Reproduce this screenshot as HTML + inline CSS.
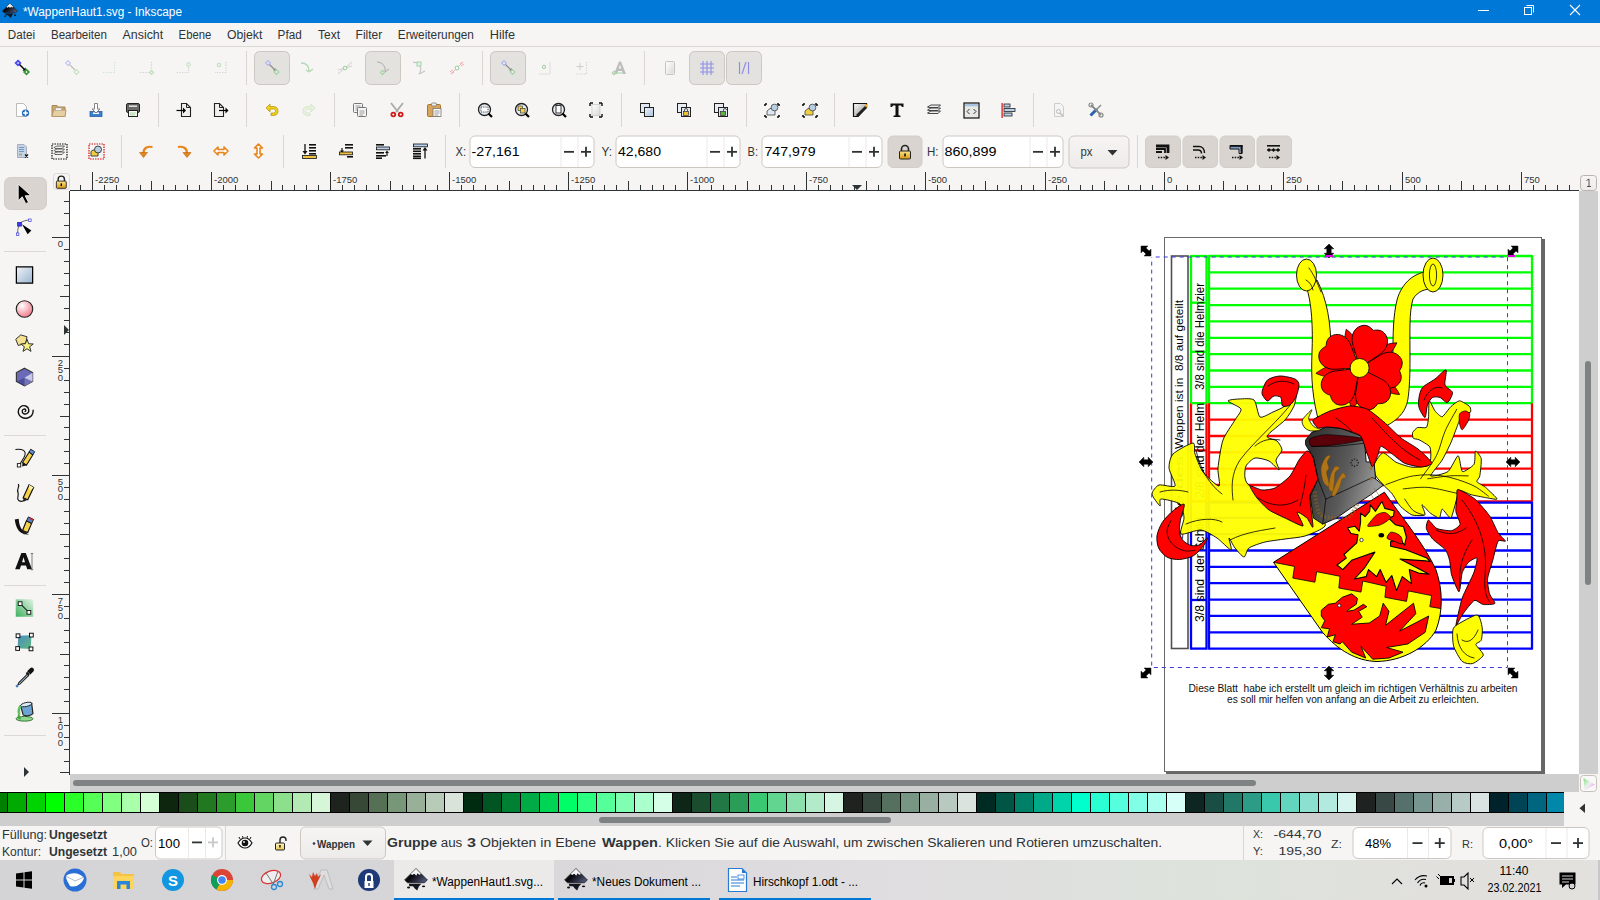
<!DOCTYPE html><html><head><meta charset="utf-8"><title>Inkscape</title><style>html,body{margin:0;padding:0;background:#f6f5f4;overflow:hidden;width:1600px;height:900px}text{font-family:"Liberation Sans",sans-serif;white-space:pre}</style></head><body><svg width="1600" height="900" viewBox="0 0 1600 900" font-family='"Liberation Sans", sans-serif' style="display:block"><defs>
<linearGradient id="gpage" x1="0" y1="0" x2="1" y2="1"><stop offset="0" stop-color="#fff"/><stop offset="1" stop-color="#d8d8d8"/></linearGradient>
<linearGradient id="gblue" x1="0" y1="0" x2="1" y2="1"><stop offset="0" stop-color="#f0f4f8"/><stop offset="1" stop-color="#a8c0dc"/></linearGradient>
<linearGradient id="gblue2" x1="0" y1="0" x2="0" y2="1"><stop offset="0" stop-color="#5a82b8"/><stop offset="1" stop-color="#dfe8f4"/></linearGradient>
<linearGradient id="gfill" x1="0" y1="0" x2="1" y2="1"><stop offset="0" stop-color="#fff"/><stop offset="1" stop-color="#888"/></linearGradient>
<linearGradient id="glock" x1="0" y1="0" x2="0" y2="1"><stop offset="0" stop-color="#fde48a"/><stop offset="1" stop-color="#d89a10"/></linearGradient>
<linearGradient id="glock2" x1="0" y1="0" x2="0" y2="1"><stop offset="0" stop-color="#fff6c0"/><stop offset="1" stop-color="#e8c850"/></linearGradient>
<linearGradient id="gbtn" x1="0" y1="0" x2="0" y2="1"><stop offset="0" stop-color="#f6f5f4"/><stop offset="1" stop-color="#edebe9"/></linearGradient>
<linearGradient id="grect" x1="0" y1="0" x2="1" y2="1"><stop offset="0" stop-color="#f0f4f8"/><stop offset="1" stop-color="#9ab4d0"/></linearGradient>
<radialGradient id="gcirc" cx="0.35" cy="0.3" r="0.8"><stop offset="0" stop-color="#fff"/><stop offset="1" stop-color="#f07080"/></radialGradient>
<linearGradient id="ggrad" x1="0" y1="1" x2="1" y2="0"><stop offset="0" stop-color="#40b060"/><stop offset="1" stop-color="#e0f4e4"/></linearGradient>
<linearGradient id="gmesh" x1="0" y1="0" x2="1" y2="1"><stop offset="0" stop-color="#4a8cc0"/><stop offset="1" stop-color="#60b880"/></linearGradient>
<linearGradient id="gcm" x1="0" y1="0" x2="1" y2="1"><stop offset="0" stop-color="#80e080"/><stop offset="0.5" stop-color="#f0f0f0"/><stop offset="1" stop-color="#e080f0"/></linearGradient>
<linearGradient id="ghelm" x1="0" y1="0" x2="1" y2="0.3"><stop offset="0" stop-color="#2a2a2a"/><stop offset="0.6" stop-color="#5a5a5a"/><stop offset="1" stop-color="#9a9a9a"/></linearGradient>
<linearGradient id="gink" x1="0" y1="0" x2="1" y2="0.6"><stop offset="0" stop-color="#777"/><stop offset="0.45" stop-color="#050508"/><stop offset="1" stop-color="#4a5070"/></linearGradient>
<linearGradient id="gtask" x1="0" y1="0" x2="1" y2="0"><stop offset="0" stop-color="#d4d3d5"/><stop offset="0.25" stop-color="#d6d5d7"/><stop offset="0.55" stop-color="#e0dde0"/><stop offset="0.75" stop-color="#dde3dc"/><stop offset="0.9" stop-color="#e1e0dd"/><stop offset="1" stop-color="#e2e1de"/></linearGradient>
</defs><rect x="0" y="0" width="1600" height="900" fill="#f6f5f4" /><rect x="0" y="0" width="1600" height="23" fill="#0078d7" /><text x="23" y="16" font-size="12" fill="#ffffff" font-weight="normal" text-anchor="start" textLength="159" lengthAdjust="spacingAndGlyphs" >*WappenHaut1.svg - Inkscape</text><rect x="1478" y="10" width="11" height="1" fill="#fff"/><rect x="1524.5" y="7.5" width="7" height="7" fill="none" stroke="#fff"/><path d="M1526.5 5.5H1533.5V12.5" fill="none" stroke="#fff"/><path d="M1570 5L1580 15M1580 5L1570 15" stroke="#fff" stroke-width="1.1"/><g transform="translate(2,3) scale(0.8)"><path d="M10 0.5L19.5 10L17 12.3H3L0.5 10Z" fill="url(#gink)" stroke="#111" stroke-width="0.6"/><path d="M10 0.7L14.2 4.9L12.6 5.6L11.3 4.4L10.2 6.4L8.6 4.8L6.8 5.8L5.6 5.1Z" fill="#f2f2f2"/><path d="M4 13.2H14.5L12.5 15.3L11 18.8L9.2 17.2L7.5 15.2H4.5Z" fill="#151520"/><ellipse cx="3.8" cy="16.3" rx="1.3" ry="0.8" fill="#111"/><ellipse cx="16.3" cy="15.3" rx="1.4" ry="0.8" fill="#111"/></g><text x="7.800000000000001" y="39" font-size="12.5" fill="#2e3436" font-weight="normal" text-anchor="start" textLength="27.2" lengthAdjust="spacingAndGlyphs" >Datei</text><text x="50.9" y="39" font-size="12.5" fill="#2e3436" font-weight="normal" text-anchor="start" textLength="56.1" lengthAdjust="spacingAndGlyphs" >Bearbeiten</text><text x="122.60000000000001" y="39" font-size="12.5" fill="#2e3436" font-weight="normal" text-anchor="start" textLength="40.6" lengthAdjust="spacingAndGlyphs" >Ansicht</text><text x="178.6" y="39" font-size="12.5" fill="#2e3436" font-weight="normal" text-anchor="start" textLength="32.7" lengthAdjust="spacingAndGlyphs" >Ebene</text><text x="226.9" y="39" font-size="12.5" fill="#2e3436" font-weight="normal" text-anchor="start" textLength="35.4" lengthAdjust="spacingAndGlyphs" >Objekt</text><text x="277.59999999999997" y="39" font-size="12.5" fill="#2e3436" font-weight="normal" text-anchor="start" textLength="24.1" lengthAdjust="spacingAndGlyphs" >Pfad</text><text x="318.09999999999997" y="39" font-size="12.5" fill="#2e3436" font-weight="normal" text-anchor="start" textLength="21.9" lengthAdjust="spacingAndGlyphs" >Text</text><text x="355.59999999999997" y="39" font-size="12.5" fill="#2e3436" font-weight="normal" text-anchor="start" textLength="26.6" lengthAdjust="spacingAndGlyphs" >Filter</text><text x="397.79999999999995" y="39" font-size="12.5" fill="#2e3436" font-weight="normal" text-anchor="start" textLength="76.1" lengthAdjust="spacingAndGlyphs" >Erweiterungen</text><text x="489.7" y="39" font-size="12.5" fill="#2e3436" font-weight="normal" text-anchor="start" textLength="25.5" lengthAdjust="spacingAndGlyphs" >Hilfe</text><rect x="0" y="46" width="1600" height="1" fill="#dcd9d5" /><g transform="translate(14.0,60.0) scale(1.0)"><path d="M4 0.7000000000000002L6.3 3L4 5.3L1.7000000000000002 3Z" fill="#fff" stroke="#4a4af0" stroke-width="1.8"/><path d="M5.5 4.5L11 10" stroke="#000" stroke-width="1.4"/><path d="M8.5 10.5L12 11L11.5 7.5Z" fill="#000"/><path d="M12.5 9.7L14.8 12L12.5 14.3L10.2 12Z" fill="#fff" stroke="#3a9a3a" stroke-width="1.8"/></g><rect x="47" y="51" width="1" height="34" fill="#dad6d2" /><g transform="translate(64.0,60.0) scale(1.0)"><path d="M4 0.7000000000000002L6.3 3L4 5.3L1.7000000000000002 3Z" fill="#fff" stroke="#c8c8f4" stroke-width="1.3"/><path d="M5.5 4.5L11 10" stroke="#bbb" stroke-width="1.1"/><path d="M12.5 9.7L14.8 12L12.5 14.3L10.2 12Z" fill="#fff" stroke="#c6e2c6" stroke-width="1.3"/></g><g transform="translate(101.0,60.0) scale(1.0)"><path d="M13.5 2V12.5H2" fill="none" stroke="#cfe5cf" stroke-width="1.2" stroke-dasharray="1.3 1.3"/></g><g transform="translate(138.0,60.0) scale(1.0)"><path d="M13.5 2V12.5H2" fill="none" stroke="#d2d2d2" stroke-width="1.2" stroke-dasharray="1.3 1.3"/><path d="M13.5 10.5L15.5 12.5L13.5 14.5L11.5 12.5Z" fill="#eaf4ea" stroke="#bfe0bf" stroke-width="1.2"/></g><g transform="translate(175.0,60.0) scale(1.0)"><path d="M13.5 2V12.5H2" fill="none" stroke="#d2d2d2" stroke-width="1.2" stroke-dasharray="1.3 1.3"/><circle cx="13.5" cy="4.5" r="1.8" fill="#eaf4ea" stroke="#bfe0bf"/></g><g transform="translate(212.0,60.0) scale(1.0)"><path d="M14 2V12.5H3" fill="none" stroke="#d2d2d2" stroke-width="1.2" stroke-dasharray="1.3 1.3"/><circle cx="7" cy="5" r="1.7" fill="none" stroke="#bfe0bf" stroke-width="1.2"/></g><rect x="246" y="51" width="1" height="34" fill="#dad6d2" /><rect x="254.5" y="51.5" width="35" height="33" rx="5" fill="#e3e2de" stroke="#cdc7c2"/><g transform="translate(264.0,60.0) scale(1.0)"><path d="M4 0.7000000000000002L6.3 3L4 5.3L1.7000000000000002 3Z" fill="#eee" stroke="#b8b8f0" stroke-width="1.3"/><path d="M5.5 4.5L11 10" stroke="#888" stroke-width="1.1"/><path d="M9 10.5L12 11L11.5 8Z" fill="#888"/><path d="M12.5 9.7L14.8 12L12.5 14.3L10.2 12Z" fill="#eee" stroke="#a8d4a8" stroke-width="1.3"/></g><g transform="translate(300.0,60.0) scale(1.0)"><path d="M1 3C6 3 9 6 9 11M9 12L13 9M9 12L6 10" fill="none" stroke="#b4dab4" stroke-width="1.3"/></g><g transform="translate(337.0,60.0) scale(1.0)"><path d="M1 14L15 2M1 10L15 6" stroke="#c8c8c8" stroke-width="0.9"/><circle cx="8" cy="8" r="1.7" fill="#fff" stroke="#a8d4a8" stroke-width="1.2"/></g><rect x="365.5" y="51.5" width="35" height="33" rx="5" fill="#e3e2de" stroke="#cdc7c2"/><g transform="translate(375.0,60.0) scale(1.0)"><path d="M2 2C7 2 11 6 10 12M10 12L14 9" fill="none" stroke="#aaa" stroke-width="1"/><path d="M7.5 10.5L9.5 12.5L7.5 14.5L5.5 12.5Z" fill="#eee" stroke="#a8d4a8" stroke-width="1.3"/></g><g transform="translate(412.0,60.0) scale(1.0)"><path d="M1 2L5 3C9 6 10 10 7 14M7 14L13 11" fill="none" stroke="#bbb" stroke-width="1"/><rect x="5" y="2" width="4" height="4" fill="#e6f2e6" stroke="#a8d4a8"/></g><g transform="translate(449.0,60.0) scale(1.0)"><path d="M2 14L14 2" stroke="#f0b0b0" stroke-width="0.9"/><path d="M1 12l3 -2M2 14l3 -2M11 4l3 -2M12 6l3 -2" stroke="#f0a0a0" stroke-width="0.9"/><circle cx="8" cy="8" r="1.8" fill="#fff" stroke="#a8d4a8" stroke-width="1.2"/></g><rect x="482" y="51" width="1" height="34" fill="#dad6d2" /><rect x="490.5" y="51.5" width="35" height="33" rx="5" fill="#e3e2de" stroke="#cdc7c2"/><g transform="translate(500.0,60.0) scale(1.0)"><path d="M4 0.7000000000000002L6.3 3L4 5.3L1.7000000000000002 3Z" fill="#eee" stroke="#b8b8f0" stroke-width="1.3"/><path d="M5.5 4.5L11 10" stroke="#888" stroke-width="1.1"/><path d="M9 10.5L12 11L11.5 8Z" fill="#888"/><path d="M12.5 9.7L14.8 12L12.5 14.3L10.2 12Z" fill="#eee" stroke="#a8d4a8" stroke-width="1.3"/></g><g transform="translate(536.0,60.0) scale(1.0)"><path d="M14 2V14H3" fill="none" stroke="#ddd" stroke-width="1"/><circle cx="8" cy="7" r="1.6" fill="none" stroke="#a8d4a8" stroke-width="1.1"/></g><g transform="translate(573.0,60.0) scale(1.0)"><path d="M13.5 2V14H2" fill="none" stroke="#d2d2d2" stroke-width="1.2" stroke-dasharray="1.3 1.3"/><path d="M7 3V10M3.5 6.5H10.5" stroke="#ccc" stroke-width="1"/></g><g transform="translate(611.0,60.0) scale(1.0)"><path d="M3 14L8 1.5H10L15 14H12L11 11H7L6 14Z M7.7 8.5H10.3L9 4.5Z" fill="#bdbdbd" fill-rule="evenodd"/><path d="M3 11.2L4.8 13L3 14.8L1.2 13Z" fill="none" stroke="#a8d4a8" stroke-width="1.1"/><path d="M5 13H12" stroke="#a8d4a8"/></g><rect x="644" y="51" width="1" height="34" fill="#dad6d2" /><g transform="translate(662.0,60.0) scale(1.0)"><rect x="3.5" y="1.5" width="9" height="13" rx="1" fill="#f2f2f2" stroke="#c4c4c4"/><rect x="4.5" y="2.5" width="7" height="11" fill="url(#gpage)"/></g><rect x="689.5" y="51.5" width="35" height="33" rx="5" fill="#e3e2de" stroke="#cdc7c2"/><g transform="translate(699.0,60.0) scale(1.0)"><path d="M4 1V15M8 1V15M12 1V15M1 4H15M1 8H15M1 12H15" stroke="#8f8fe6" stroke-width="1.1"/></g><rect x="726.5" y="51.5" width="35" height="33" rx="5" fill="#e3e2de" stroke="#cdc7c2"/><g transform="translate(736.0,60.0) scale(1.0)"><path d="M3.5 2V14M12.5 2V14M10 2L6 14" stroke="#8f8fe6" stroke-width="1.2"/></g><g transform="translate(14.0,102.0) scale(1.0)"><path d="M2.5 1.5H9.5L12.5 4.5V14.5H2.5Z" fill="#fff" stroke="#bbb"/><circle cx="11.5" cy="11" r="3.6" fill="#2266bb"/><path d="M11.5 8.6V13.4M9.1 11H13.9" stroke="#fff" stroke-width="1.5"/></g><g transform="translate(50.5,102.0) scale(1.0)"><path d="M1.5 3.5H6.5L7.5 5H14.5V14.5H1.5Z" fill="#c9a872" stroke="#a8884f"/><path d="M1.5 14.5L3 8H15.5L14.5 14.5Z" fill="#e6cfa0" stroke="#b8986a"/><rect x="5" y="6" width="6" height="2.5" fill="#fff" stroke="#999" stroke-width="0.6"/></g><g transform="translate(88.0,102.0) scale(1.0)"><rect x="2" y="9.5" width="12" height="5" fill="#3a7fd0" stroke="#2a5fa0" stroke-width="0.8"/><rect x="5" y="10.5" width="6" height="1.5" fill="#fff"/><path d="M6.5 1.5H9.5V7H12L8 11L4 7H6.5Z" fill="#fff" stroke="#777" stroke-width="0.9"/></g><g transform="translate(125.0,102.0) scale(1.0)"><rect x="1.5" y="1.5" width="13" height="9" rx="1.5" fill="#6a6a6a" stroke="#222"/><rect x="3.5" y="3" width="9" height="2.5" fill="#ddd" stroke="#333" stroke-width="0.5"/><rect x="3.5" y="8.5" width="9" height="6" fill="#f4f8f0" stroke="#222"/><path d="M5 11H11M5 12.8H10" stroke="#9c9" stroke-width="0.8"/></g><rect x="158" y="93" width="1" height="34" fill="#dad6d2" /><g transform="translate(176.0,102.0) scale(1.0)"><path d="M5.5 1.5H10.5L14.5 5.5V14.5H5.5Z" fill="#f0f0ec" stroke="#222" stroke-width="1.1"/><path d="M10.5 1.5V5.5H14.5" fill="none" stroke="#222"/><path d="M0.5 8.5H8" stroke="#000" stroke-width="1.2"/><path d="M7 5.5L10 8.5L7 11.5Z" fill="#000"/></g><g transform="translate(213.0,102.0) scale(1.0)"><path d="M1.5 1.5H6.5L10.5 5.5V14.5H1.5Z" fill="#f0f0ec" stroke="#222" stroke-width="1.1"/><path d="M6.5 1.5V5.5H10.5" fill="none" stroke="#222"/><path d="M6 8.5H13" stroke="#000" stroke-width="1.2"/><path d="M12.5 5.5L15.5 8.5L12.5 11.5Z" fill="#000"/></g><rect x="246" y="93" width="1" height="34" fill="#dad6d2" /><g transform="translate(264.0,102.0) scale(1.0)"><path d="M2 6L6 2V4.5H9.5C12.5 4.5 14 6.5 14 9S12.5 13.5 9.5 13.5H7V11H9.5C11 11 11.5 10 11.5 9S11 7 9.5 7H6V10Z" fill="#f0d020" stroke="#b89a00" stroke-width="0.8"/></g><g transform="translate(301.0,102.0) scale(1.0)"><path d="M14 6L10 2V4.5H6.5C3.5 4.5 2 6.5 2 9S3.5 13.5 6.5 13.5H9V11H6.5C5 11 4.5 10 4.5 9S5 7 6.5 7H10V10Z" fill="#e8f2e0" stroke="#cfe3c4" stroke-width="0.8"/></g><rect x="334" y="93" width="1" height="34" fill="#dad6d2" /><g transform="translate(352.0,102.0) scale(1.0)"><rect x="1.5" y="1.5" width="9" height="9" rx="1" fill="#f4f4f4" stroke="#777"/><path d="M3.5 4H8.5M3.5 6H8.5M3.5 8H7" stroke="#888" stroke-width="0.8"/><rect x="5.5" y="5.5" width="9" height="9" rx="1" fill="#f4f4f4" stroke="#777"/><path d="M7.5 9H12.5M7.5 11H12.5M7.5 13H11" stroke="#888" stroke-width="0.8"/></g><g transform="translate(389.0,102.0) scale(1.0)"><path d="M2 1L9 10M14 1L7 10" stroke="#aaa" stroke-width="1.8"/><circle cx="4.3" cy="12.5" r="2.8" fill="#d01818"/><circle cx="11.7" cy="12.5" r="2.8" fill="#d01818"/><circle cx="4.3" cy="12.5" r="1" fill="#fff"/><circle cx="11.7" cy="12.5" r="1" fill="#fff"/></g><g transform="translate(426.0,102.0) scale(1.0)"><rect x="1.5" y="2.5" width="13" height="12" rx="1" fill="#d9a55b" stroke="#a8742a"/><rect x="5.5" y="1" width="5" height="3" rx="1" fill="#eee" stroke="#777" stroke-width="0.8"/><rect x="7" y="6.5" width="8" height="8" fill="#f8f8f8" stroke="#777" stroke-width="0.8"/><path d="M8.5 9H13.5M8.5 11H13.5M8.5 13H12" stroke="#888" stroke-width="0.8"/></g><rect x="459" y="93" width="1" height="34" fill="#dad6d2" /><g transform="translate(477.0,102.0) scale(1.0)"><circle cx="7.5" cy="7.5" r="6" fill="#e6ecf2" stroke="#222" stroke-width="1.3"/><rect x="4" y="5" width="7" height="5" fill="#fff" stroke="#222" stroke-width="0.8" stroke-dasharray="1 0.8"/><path d="M11.5 11.5L15 15" stroke="#000" stroke-width="2.2"/></g><g transform="translate(514.0,102.0) scale(1.0)"><circle cx="7.5" cy="7.5" r="6" fill="#e6ecf2" stroke="#222" stroke-width="1.3"/><rect x="4" y="4" width="4.5" height="4.5" fill="#f2d050" stroke="#444" stroke-width="0.7"/><rect x="6.5" y="6.5" width="4.5" height="4.5" fill="#f2d050" stroke="#444" stroke-width="0.7"/><path d="M11.5 11.5L15 15" stroke="#000" stroke-width="2.2"/></g><g transform="translate(551.0,102.0) scale(1.0)"><circle cx="7.5" cy="7.5" r="6" fill="#e6ecf2" stroke="#222" stroke-width="1.3"/><rect x="5" y="3.5" width="5" height="7.5" fill="#fff" stroke="#222" stroke-width="0.9"/><path d="M11.5 11.5L15 15" stroke="#000" stroke-width="2.2"/></g><g transform="translate(588.0,102.0) scale(1.0)"><rect x="4" y="2.5" width="8" height="11" fill="url(#gpage)" stroke="#bbb" stroke-width="0.6"/><path d="M2 1V4M2 1H5M14 1V4M14 1H11M2 15V12M2 15H5M14 15V12M14 15H11" stroke="#111" stroke-width="1.4"/></g><rect x="621" y="93" width="1" height="34" fill="#dad6d2" /><g transform="translate(639.0,102.0) scale(1.0)"><rect x="1.5" y="1.5" width="9" height="9" fill="#e0e8f0" stroke="#222"/><rect x="5.5" y="5.5" width="9" height="9" fill="url(#gblue)" stroke="#222"/></g><g transform="translate(676.0,102.0) scale(1.0)"><rect x="1.5" y="1.5" width="9" height="9" fill="#e8eef4" stroke="#222"/><rect x="5.5" y="5.5" width="9" height="9" fill="#dfe8f2" stroke="#222"/><rect x="7.5" y="9.5" width="5" height="4" fill="#f0c030" stroke="#333" stroke-width="0.7"/><path d="M8.5 9.5V8A1.5 1.5 0 0 1 11.5 8V9.5" fill="none" stroke="#333" stroke-width="0.8"/></g><g transform="translate(713.0,102.0) scale(1.0)"><rect x="1.5" y="1.5" width="9" height="9" fill="#e8eef4" stroke="#222"/><rect x="5.5" y="5.5" width="9" height="9" fill="#dfe8f2" stroke="#222"/><rect x="7.5" y="9.5" width="5" height="4" fill="#60b040" stroke="#333" stroke-width="0.7"/><path d="M10.5 9.5V8A1.5 1.5 0 0 1 13.5 8" fill="none" stroke="#333" stroke-width="0.8"/></g><rect x="746" y="93" width="1" height="34" fill="#dad6d2" /><g transform="translate(764.0,102.0) scale(1.0)"><path d="M1 2h2M1 2v2M13 2h2M15 2v2M1 15h2M1 15v-2M13 15h2M15 15v-2" stroke="#111" stroke-width="1.6"/><path d="M3 9L6 6.5H11V13H3Z" fill="#dfe8f2" stroke="#444" stroke-width="0.8"/><circle cx="10.5" cy="5.5" r="3.4" fill="#b8cde0" stroke="#444" stroke-width="0.8"/></g><g transform="translate(802.0,102.0) scale(1.0)"><path d="M1 2h2M1 2v2M13 2h2M15 2v2M1 15h2M1 15v-2M13 15h2M15 15v-2" stroke="#111" stroke-width="1.6"/><path d="M3 9L6 6.5H11V13H3Z" fill="#f0d040" stroke="#444" stroke-width="0.8"/><circle cx="10.5" cy="5.5" r="3.4" fill="#b8cde0" stroke="#444" stroke-width="0.8"/></g><rect x="834" y="93" width="1" height="34" fill="#dad6d2" /><g transform="translate(852.0,102.0) scale(1.0)"><path d="M1.5 1.5H14.5V5L6 14.5H1.5Z" fill="url(#gfill)" stroke="#111" stroke-width="1.2"/><path d="M4 13L13 4L15 6L6 15Z" fill="#222"/><path d="M12.5 3.5L15.5 1.5V6Z" fill="#f0b020"/></g><g transform="translate(889.0,102.0) scale(1.0)"><path d="M1.5 1.5H14.5V5H13L12 3.5H9.5V13.2L11.5 13.8V15H4.5V13.8L6.5 13.2V3.5H4L3 5H1.5Z" fill="#111"/></g><g transform="translate(926.0,102.0) scale(1.0)"><path d="M1.5 11L5 9H14.5L12 11.5H3Z" fill="#eee" stroke="#333" stroke-width="0.9"/><path d="M1.5 8L5 6H14.5L12 8.5H3Z" fill="#eee" stroke="#333" stroke-width="0.9"/><path d="M1.5 5L5 3H14.5L12 5.5H3Z" fill="#eee" stroke="#333" stroke-width="0.9"/></g><g transform="translate(963.0,102.0) scale(1.0)"><rect x="1" y="1" width="15" height="15" fill="#e8e8e4" stroke="#111" stroke-width="1.2"/><rect x="2" y="2" width="13" height="2.3" fill="#aac4e4"/><path d="M6.5 7L4 9.5L6.5 12M10.5 7L13 9.5L10.5 12" fill="none" stroke="#333" stroke-width="1"/></g><g transform="translate(1000.0,102.0) scale(1.0)"><rect x="1.5" y="1" width="1.2" height="15" fill="#d01010"/><rect x="4" y="2" width="6" height="3" fill="#b8d0ec" stroke="#222" stroke-width="0.8"/><rect x="4" y="6.5" width="11" height="3" fill="#b8d0ec" stroke="#222" stroke-width="0.8"/><rect x="4" y="11" width="8" height="3" fill="#b8d0ec" stroke="#222" stroke-width="0.8"/></g><rect x="1033" y="93" width="1" height="34" fill="#dad6d2" /><g transform="translate(1051.0,102.0) scale(1.0)"><path d="M3.5 1.5H9.5L12.5 4.5V14.5H3.5Z" fill="#f4f4f4" stroke="#ccc"/><circle cx="7.5" cy="9.5" r="2" fill="none" stroke="#bbb"/><path d="M9 11L12 14" stroke="#bbb" stroke-width="1.4"/></g><g transform="translate(1088.0,102.0) scale(1.0)"><path d="M2.5 13.5L9 7" stroke="#2a62b0" stroke-width="3"/><path d="M9 7L13 3" stroke="#888" stroke-width="1.5"/><path d="M3 3L13 13" stroke="#888" stroke-width="1.8"/><circle cx="3" cy="3" r="2" fill="none" stroke="#888" stroke-width="1.2"/><circle cx="13" cy="13" r="2" fill="none" stroke="#888" stroke-width="1.2"/></g><g transform="translate(14.0,143.0) scale(1.0)"><path d="M3.5 1.5H10L12.5 4V14.5H3.5Z" fill="#c0d4ea" stroke="#aab"/><path d="M5 4.5H10M5 6.5H10M5 8.5H10" stroke="#6688aa" stroke-width="0.8"/><rect x="5" y="10.5" width="3" height="2" fill="#c8a060"/><path d="M11 11.5L14 14.5M14 11.5L11 14.5" stroke="#111" stroke-width="1.3"/></g><g transform="translate(51.0,143.0) scale(1.0)"><rect x="1" y="1" width="15" height="15" fill="none" stroke="#111" stroke-width="1.2" stroke-dasharray="1.5 1"/><path d="M3 10.5L6 9H13.5L11 11.5H4Z" fill="#eee" stroke="#444" stroke-width="0.8"/><path d="M3 7.5L6 6H13.5L11 8.5H4Z" fill="#eee" stroke="#444" stroke-width="0.8"/><path d="M3 4.5L6 3H13.5L11 5.5H4Z" fill="#eee" stroke="#444" stroke-width="0.8"/></g><g transform="translate(88.0,143.0) scale(1.0)"><rect x="1" y="1" width="15" height="15" fill="none" stroke="#d01010" stroke-width="1.2" stroke-dasharray="1.5 1"/><path d="M3 8.5L5 7H10V13H3Z" fill="#f0d040" stroke="#333" stroke-width="0.9"/><circle cx="10" cy="6.5" r="3.5" fill="#b8cde0" stroke="#333" stroke-width="0.9"/></g><rect x="121" y="135" width="1" height="33" fill="#dad6d2" /><g transform="translate(138.5,143.0) scale(1.0)"><path d="M14 4C9 3 5 5 5 10" fill="none" stroke="#e8851a" stroke-width="2.2"/><path d="M1 9.5H9L5 14.5Z" fill="#e8851a" stroke="#b85f08" stroke-width="0.6"/></g><g transform="translate(176.0,143.0) scale(1.0)"><path d="M2 4C7 3 11 5 11 10" fill="none" stroke="#e8851a" stroke-width="2.2"/><path d="M15 9.5H7L11 14.5Z" fill="#e8851a" stroke="#b85f08" stroke-width="0.6"/></g><g transform="translate(213.0,143.0) scale(1.0)"><path d="M1 8L5 4V6.5H11V4L15 8L11 12V9.5H5V12Z" fill="#fff" stroke="#e8851a" stroke-width="1.6" stroke-linejoin="round"/></g><g transform="translate(250.5,143.0) scale(1.0)"><path d="M8 1L12 5H9.5V11H12L8 15L4 11H6.5V5H4Z" fill="#fff" stroke="#e8851a" stroke-width="1.6" stroke-linejoin="round"/></g><rect x="283" y="135" width="1" height="33" fill="#dad6d2" /><g transform="translate(301.0,143.0) scale(1.0)"><path d="M4 1V10" stroke="#111" stroke-width="1.3"/><path d="M1.5 8L4 11.5L6.5 8Z" fill="#111"/><rect x="8" y="1" width="7" height="1.6" fill="#111"/><rect x="8" y="4" width="7" height="1.6" fill="#111"/><rect x="8" y="7" width="7" height="1.6" fill="#111"/><rect x="8" y="10" width="7" height="1.6" fill="#111"/><rect x="1.5" y="12.5" width="14" height="3" fill="#f0c040" stroke="#111" stroke-width="0.8"/></g><g transform="translate(338.0,143.0) scale(1.0)"><rect x="7" y="1" width="8" height="1.6" fill="#111"/><rect x="7" y="4" width="8" height="1.6" fill="#111"/><rect x="9" y="13" width="6" height="1.6" fill="#111"/><path d="M4 5V9" stroke="#111" stroke-width="1.2"/><path d="M2 7.5L4 10L6 7.5Z" fill="#111"/><rect x="1.5" y="9" width="13" height="2.8" fill="#f0c040" stroke="#111" stroke-width="0.8"/></g><g transform="translate(375.0,143.0) scale(1.0)"><rect x="1" y="1" width="8" height="1.6" fill="#111"/><rect x="1" y="9" width="8" height="1.6" fill="#111"/><rect x="1" y="12" width="10" height="1.6" fill="#111"/><rect x="1" y="14.4" width="6" height="1.6" fill="#111"/><rect x="1.5" y="4" width="13" height="2.8" fill="#b8d0ec" stroke="#111" stroke-width="0.8"/><path d="M12 13V9" stroke="#111" stroke-width="1.2"/><path d="M10 10L12 7.5L14 10Z" fill="#111"/></g><g transform="translate(412.0,143.0) scale(1.0)"><rect x="1.5" y="1" width="14" height="2.8" fill="#b8d0ec" stroke="#111" stroke-width="0.8"/><rect x="1" y="5" width="8" height="1.6" fill="#111"/><rect x="1" y="7.5" width="8" height="1.6" fill="#111"/><rect x="1" y="10" width="8" height="1.6" fill="#111"/><rect x="1" y="12.5" width="8" height="1.6" fill="#111"/><rect x="1" y="14.5" width="8" height="1.6" fill="#111"/><path d="M13 15.5V6" stroke="#111" stroke-width="1.3"/><path d="M10.5 7.5L13 4L15.5 7.5Z" fill="#111"/></g><rect x="445" y="135" width="1" height="33" fill="#dad6d2" /><text x="455.5" y="156" font-size="12.5" fill="#2e3436" font-weight="normal" text-anchor="start" textLength="10.5" lengthAdjust="spacingAndGlyphs" >X:</text><rect x="470.0" y="136.0" width="124.0" height="31.5" rx="5" fill="#fff" stroke="#cdc7c2"/><rect x="560.5" y="136.5" width="1" height="30.5" fill="#ebe9e6" /><rect x="577.5" y="136.5" width="1" height="30.5" fill="#ebe9e6" /><rect x="564.0" y="150.95" width="10" height="1.8" fill="#2e3436" /><rect x="581.0" y="150.95" width="10" height="1.8" fill="#2e3436" /><rect x="585.1" y="146.75" width="1.8" height="10" fill="#2e3436" /><text x="471.6" y="156.35" font-size="12.5" fill="#000" font-weight="normal" text-anchor="start" textLength="48" lengthAdjust="spacingAndGlyphs" >-27,161</text><text x="601.5" y="156" font-size="12.5" fill="#2e3436" font-weight="normal" text-anchor="start" textLength="10.5" lengthAdjust="spacingAndGlyphs" >Y:</text><rect x="616.0" y="136.0" width="124.0" height="31.5" rx="5" fill="#fff" stroke="#cdc7c2"/><rect x="706.5" y="136.5" width="1" height="30.5" fill="#ebe9e6" /><rect x="723.5" y="136.5" width="1" height="30.5" fill="#ebe9e6" /><rect x="710.0" y="150.95" width="10" height="1.8" fill="#2e3436" /><rect x="727.0" y="150.95" width="10" height="1.8" fill="#2e3436" /><rect x="731.1" y="146.75" width="1.8" height="10" fill="#2e3436" /><text x="618" y="156.35" font-size="12.5" fill="#000" font-weight="normal" text-anchor="start" textLength="43" lengthAdjust="spacingAndGlyphs" >42,680</text><text x="747.5" y="156" font-size="12.5" fill="#2e3436" font-weight="normal" text-anchor="start" textLength="10.5" lengthAdjust="spacingAndGlyphs" >B:</text><rect x="762.0" y="136.0" width="120.0" height="31.5" rx="5" fill="#fff" stroke="#cdc7c2"/><rect x="848.5" y="136.5" width="1" height="30.5" fill="#ebe9e6" /><rect x="865.5" y="136.5" width="1" height="30.5" fill="#ebe9e6" /><rect x="852.0" y="150.95" width="10" height="1.8" fill="#2e3436" /><rect x="869.0" y="150.95" width="10" height="1.8" fill="#2e3436" /><rect x="873.1" y="146.75" width="1.8" height="10" fill="#2e3436" /><text x="764.5" y="156.35" font-size="12.5" fill="#000" font-weight="normal" text-anchor="start" textLength="51" lengthAdjust="spacingAndGlyphs" >747,979</text><rect x="888.0" y="136.0" width="34.0" height="31.5" rx="5" fill="#d9d4cf" stroke="#d3cec9"/><g transform="translate(897.0,144.0) scale(1.0)"><path d="M4.5 7V5A3.5 3.5 0 0 1 11.5 5V7" fill="none" stroke="#222" stroke-width="1.6"/><rect x="2.5" y="7" width="11" height="8" rx="1" fill="url(#glock)" stroke="#222" stroke-width="1"/><rect x="7.2" y="9.5" width="1.6" height="3" fill="#111"/></g><text x="927" y="156" font-size="12.5" fill="#2e3436" font-weight="normal" text-anchor="start" textLength="11.5" lengthAdjust="spacingAndGlyphs" >H:</text><rect x="943.0" y="136.0" width="120.0" height="31.5" rx="5" fill="#fff" stroke="#cdc7c2"/><rect x="1029.5" y="136.5" width="1" height="30.5" fill="#ebe9e6" /><rect x="1046.5" y="136.5" width="1" height="30.5" fill="#ebe9e6" /><rect x="1033.0" y="150.95" width="10" height="1.8" fill="#2e3436" /><rect x="1050.0" y="150.95" width="10" height="1.8" fill="#2e3436" /><rect x="1054.1" y="146.75" width="1.8" height="10" fill="#2e3436" /><text x="944.6" y="156.35" font-size="12.5" fill="#000" font-weight="normal" text-anchor="start" textLength="52" lengthAdjust="spacingAndGlyphs" >860,899</text><rect x="1069" y="136" width="60" height="32" rx="5" fill="url(#gbtn)" stroke="#cdc7c2"/><text x="1080.5" y="156" font-size="12.5" fill="#2e3436" font-weight="normal" text-anchor="start" textLength="12" lengthAdjust="spacingAndGlyphs" >px</text><path d="M1107.5 150H1117.5L1112.5 155.5Z" fill="#2e3436"/><rect x="1137" y="135" width="1" height="33" fill="#dad6d2" /><rect x="1145.5" y="136.0" width="35" height="31.5" rx="5" fill="#d9d4cf" stroke="#d3cec9"/><rect x="1183.0" y="136.0" width="34.5" height="31.5" rx="5" fill="#d9d4cf" stroke="#d3cec9"/><rect x="1220.0" y="136.0" width="34.5" height="31.5" rx="5" fill="#d9d4cf" stroke="#d3cec9"/><rect x="1257.0" y="136.0" width="34.5" height="31.5" rx="5" fill="#d9d4cf" stroke="#d3cec9"/><g transform="translate(1155.0,144.0) scale(1.0)"><path d="M1 2H13V9M1 5H10V9M1 8H7" fill="none" stroke="#111" stroke-width="1.8"/><path d="M1 2H13V9" fill="none" stroke="#111" stroke-width="2.8"/><path d="M3 13.5H11" stroke="#111" stroke-width="1.3" stroke-dasharray="1.5 1.2"/><path d="M10.5 11L14 13.5L10.5 16Z" fill="#111"/></g><g transform="translate(1192.0,144.0) scale(1.0)"><path d="M1 2.5H7C10 2.5 12.5 5 12.5 9M1 6H6C8 6 9.5 7.5 9.5 9.5" fill="none" stroke="#111" stroke-width="1.5"/><path d="M3 13.5H11" stroke="#111" stroke-width="1.3" stroke-dasharray="1.5 1.2"/><path d="M10.5 11L14 13.5L10.5 16Z" fill="#111"/></g><g transform="translate(1229.0,144.0) scale(1.0)"><path d="M1 1.5H13V9.5H10V5H1Z" fill="url(#gblue2)" stroke="#111" stroke-width="1"/><rect x="1" y="1" width="12.5" height="1.8" fill="#111"/><rect x="11.6" y="1" width="1.8" height="8.5" fill="#111"/><path d="M3 13.5H11" stroke="#111" stroke-width="1.3" stroke-dasharray="1.5 1.2"/><path d="M10.5 11L14 13.5L10.5 16Z" fill="#111"/></g><g transform="translate(1266.0,144.0) scale(1.0)"><rect x="1" y="1" width="13" height="1.6" fill="#111"/><path d="M1 6L3 4L5 6L3 8ZM5.5 6L7.5 4L9.5 6L7.5 8ZM10 6L12 4L14 6L12 8Z" fill="#111"/><rect x="1" y="5.5" width="13" height="1" fill="#111"/><path d="M3 13.5H11" stroke="#111" stroke-width="1.3" stroke-dasharray="1.5 1.2"/><path d="M10.5 11L14 13.5L10.5 16Z" fill="#111"/></g><rect x="70" y="190" width="1509" height="1" fill="#2e3436" /><path d="M80.5 185V190M92.5 172V190M104.5 185V190M116.5 185V190M128.5 185V190M140.5 185V190M151.5 181V190M163.5 185V190M175.5 185V190M187.5 185V190M199.5 185V190M211.5 172V190M223.5 185V190M235.5 185V190M247.5 185V190M259.5 185V190M271.5 181V190M282.5 185V190M294.5 185V190M306.5 185V190M318.5 185V190M330.5 172V190M342.5 185V190M354.5 185V190M366.5 185V190M378.5 185V190M390.5 181V190M402.5 185V190M413.5 185V190M425.5 185V190M437.5 185V190M449.5 172V190M461.5 185V190M473.5 185V190M485.5 185V190M497.5 185V190M509.5 181V190M521.5 185V190M533.5 185V190M544.5 185V190M556.5 185V190M568.5 172V190M580.5 185V190M592.5 185V190M604.5 185V190M616.5 185V190M628.5 181V190M640.5 185V190M652.5 185V190M663.5 185V190M675.5 185V190M687.5 172V190M699.5 185V190M711.5 185V190M723.5 185V190M735.5 185V190M747.5 181V190M759.5 185V190M771.5 185V190M783.5 185V190M794.5 185V190M806.5 172V190M818.5 185V190M830.5 185V190M842.5 185V190M854.5 185V190M866.5 181V190M878.5 185V190M890.5 185V190M902.5 185V190M914.5 185V190M925.5 172V190M937.5 185V190M949.5 185V190M961.5 185V190M973.5 185V190M985.5 181V190M997.5 185V190M1009.5 185V190M1021.5 185V190M1033.5 185V190M1045.5 172V190M1056.5 185V190M1068.5 185V190M1080.5 185V190M1092.5 185V190M1104.5 181V190M1116.5 185V190M1128.5 185V190M1140.5 185V190M1152.5 185V190M1164.5 172V190M1176.5 185V190M1187.5 185V190M1199.5 185V190M1211.5 185V190M1223.5 181V190M1235.5 185V190M1247.5 185V190M1259.5 185V190M1271.5 185V190M1283.5 172V190M1295.5 185V190M1307.5 185V190M1318.5 185V190M1330.5 185V190M1342.5 181V190M1354.5 185V190M1366.5 185V190M1378.5 185V190M1390.5 185V190M1402.5 172V190M1414.5 185V190M1426.5 185V190M1438.5 185V190M1449.5 185V190M1461.5 181V190M1473.5 185V190M1485.5 185V190M1497.5 185V190M1509.5 185V190M1521.5 172V190M1533.5 185V190M1545.5 185V190M1557.5 185V190M1569.5 185V190" stroke="#2e3436" stroke-width="1"/><text x="95.0" y="182.7" font-size="9.5" fill="#2e3436" font-weight="normal" text-anchor="start" >-2250</text><text x="214.0" y="182.7" font-size="9.5" fill="#2e3436" font-weight="normal" text-anchor="start" >-2000</text><text x="333.0" y="182.7" font-size="9.5" fill="#2e3436" font-weight="normal" text-anchor="start" >-1750</text><text x="452.0" y="182.7" font-size="9.5" fill="#2e3436" font-weight="normal" text-anchor="start" >-1500</text><text x="571.0" y="182.7" font-size="9.5" fill="#2e3436" font-weight="normal" text-anchor="start" >-1250</text><text x="690.0" y="182.7" font-size="9.5" fill="#2e3436" font-weight="normal" text-anchor="start" >-1000</text><text x="809.0" y="182.7" font-size="9.5" fill="#2e3436" font-weight="normal" text-anchor="start" >-750</text><text x="928.0" y="182.7" font-size="9.5" fill="#2e3436" font-weight="normal" text-anchor="start" >-500</text><text x="1048.0" y="182.7" font-size="9.5" fill="#2e3436" font-weight="normal" text-anchor="start" >-250</text><text x="1167.0" y="182.7" font-size="9.5" fill="#2e3436" font-weight="normal" text-anchor="start" >0</text><text x="1286.0" y="182.7" font-size="9.5" fill="#2e3436" font-weight="normal" text-anchor="start" >250</text><text x="1405.0" y="182.7" font-size="9.5" fill="#2e3436" font-weight="normal" text-anchor="start" >500</text><text x="1524.0" y="182.7" font-size="9.5" fill="#2e3436" font-weight="normal" text-anchor="start" >750</text><path d="M852 185H862L857 190Z" fill="#2e3436"/><rect x="53.5" y="173.5" width="16" height="16" rx="3" fill="#f6f5f4" stroke="#dcd8d4" /><g transform="translate(54.099999999999994,174.8) scale(0.9)"><path d="M4.5 7V5A3.5 3.5 0 0 1 11.5 5V7" fill="none" stroke="#222" stroke-width="1.6"/><rect x="2.5" y="7" width="11" height="8" rx="1" fill="url(#glock)" stroke="#222" stroke-width="1"/><rect x="7.2" y="9.5" width="1.6" height="3" fill="#111"/></g><rect x="1580.5" y="175.5" width="16" height="15" rx="3" fill="url(#gbtn)" stroke="#b9b3ad"/><path d="M1586.5 180.5L1589 179V186.5H1591M1587 186.5H1589" fill="none" stroke="#444" stroke-width="0.9"/><rect x="69" y="191" width="1" height="584" fill="#2e3436" /><path d="M64 201.5H69M64 213.5H69M64 225.5H69M52 237.5H69M64 249.5H69M64 261.5H69M64 273.5H69M64 285.5H69M60 296.5H69M64 308.5H69M64 320.5H69M64 332.5H69M64 344.5H69M52 356.5H69M64 368.5H69M64 380.5H69M64 392.5H69M64 404.5H69M60 416.5H69M64 427.5H69M64 439.5H69M64 451.5H69M64 463.5H69M52 475.5H69M64 487.5H69M64 499.5H69M64 511.5H69M64 523.5H69M60 534.5H69M64 546.5H69M64 558.5H69M64 570.5H69M64 582.5H69M52 594.5H69M64 606.5H69M64 618.5H69M64 630.5H69M64 642.5H69M60 654.5H69M64 665.5H69M64 677.5H69M64 689.5H69M64 701.5H69M52 713.5H69M64 725.5H69M64 737.5H69M64 749.5H69M64 761.5H69M60 772.5H69" stroke="#2e3436" stroke-width="1"/><text x="60.4" y="246.8" font-size="9.5" fill="#2e3436" font-weight="normal" text-anchor="middle" >0</text><text x="60.4" y="365.8" font-size="9.5" fill="#2e3436" font-weight="normal" text-anchor="middle" >2</text><text x="60.4" y="373.40000000000003" font-size="9.5" fill="#2e3436" font-weight="normal" text-anchor="middle" >5</text><text x="60.4" y="381.0" font-size="9.5" fill="#2e3436" font-weight="normal" text-anchor="middle" >0</text><text x="60.4" y="484.8" font-size="9.5" fill="#2e3436" font-weight="normal" text-anchor="middle" >5</text><text x="60.4" y="492.40000000000003" font-size="9.5" fill="#2e3436" font-weight="normal" text-anchor="middle" >0</text><text x="60.4" y="500.0" font-size="9.5" fill="#2e3436" font-weight="normal" text-anchor="middle" >0</text><text x="60.4" y="603.8" font-size="9.5" fill="#2e3436" font-weight="normal" text-anchor="middle" >7</text><text x="60.4" y="611.4" font-size="9.5" fill="#2e3436" font-weight="normal" text-anchor="middle" >5</text><text x="60.4" y="619.0" font-size="9.5" fill="#2e3436" font-weight="normal" text-anchor="middle" >0</text><text x="60.4" y="722.8" font-size="9.5" fill="#2e3436" font-weight="normal" text-anchor="middle" >1</text><text x="60.4" y="730.4" font-size="9.5" fill="#2e3436" font-weight="normal" text-anchor="middle" >0</text><text x="60.4" y="738.0" font-size="9.5" fill="#2e3436" font-weight="normal" text-anchor="middle" >0</text><text x="60.4" y="745.5999999999999" font-size="9.5" fill="#2e3436" font-weight="normal" text-anchor="middle" >0</text><path d="M64 325V335L69 330Z" fill="#2e3436"/><rect x="4.5" y="177.5" width="42" height="32" rx="6" fill="#d9d4cf" stroke="#d3cec9"/><g transform="translate(14.5,183.0) scale(1.25)"><path d="M3 1L3 14L6.2 11L9 16.5L11.2 15.5L8.5 10.2L13 10Z" fill="#000" stroke="#fff" stroke-width="0.6"/></g><g transform="translate(14.5,218.0) scale(1.25)"><path d="M4 5C5 3 8 2 12 1.5" fill="none" stroke="#666" stroke-width="0.8"/><path d="M4 5C3 7 2.5 9 2.5 12.5" fill="none" stroke="#666" stroke-width="0.8"/><rect x="2.5" y="3.5" width="3" height="3" fill="#3c3cf0" stroke="#2222aa" stroke-width="0.6"/><rect x="11.3" y="0.8" width="2" height="2" fill="#fff" stroke="#4444dd" stroke-width="0.6"/><rect x="1.5" y="12" width="2" height="2" fill="#fff" stroke="#4444dd" stroke-width="0.6"/><path d="M6 5L13.5 10L10.5 13Z" fill="#000"/></g><rect x="4" y="251" width="42" height="1" fill="#dcd8d4" /><g transform="translate(14.5,265.0) scale(1.25)"><rect x="1.5" y="1.5" width="13" height="13" fill="url(#grect)" stroke="#000" stroke-width="1"/></g><g transform="translate(14.5,299.0) scale(1.25)"><circle cx="8" cy="8" r="6.6" fill="url(#gcirc)" stroke="#222" stroke-width="0.9"/></g><g transform="translate(14.5,333.0) scale(1.25)"><path d="M1 5L5 1.5L10 3L9 8L3 10Z" fill="#f4e090" stroke="#333" stroke-width="0.8"/><path d="M10 5L11.3 8.6L15 8.8L12.1 11L13.2 14.7L10 12.6L6.8 14.7L7.9 11L5 8.8L8.7 8.6Z" fill="#f8f080" stroke="#333" stroke-width="0.8"/></g><g transform="translate(14.5,367.0) scale(1.25)"><path d="M8 1L14.5 4.5V11.5L8 15L1.5 11.5V4.5Z" fill="#6a6ab8" stroke="#333" stroke-width="0.9"/><path d="M8 8.5L14.5 4.5V11.5L8 15Z" fill="#c8c8ec"/><path d="M8 8.5L1.5 11.5L8 15L14.5 11.5Z" fill="#3a3a8a" opacity="0.6"/></g><g transform="translate(14.5,401.0) scale(1.25)"><path d="M8 8.5C8.8 8.5 9.2 7.8 9 7.2C8.5 6 6.5 6.3 6.2 7.8C5.8 9.8 8.2 11 10 10C12.3 8.7 11.8 5 9 4C5.8 2.9 2.8 5.5 3 8.8C3.3 12.5 7 14.5 10.5 13.6C13.5 12.8 15 10 15 7" fill="none" stroke="#111" stroke-width="1.1"/></g><rect x="4" y="435" width="42" height="1" fill="#dcd8d4" /><g transform="translate(14.1,447.6) scale(1.3)"><path d="M1 1.5C5 1 8 2 8.5 4C9 7 6 9 4.5 13" fill="none" stroke="#111" stroke-width="0.8"/><rect x="2.5" y="12.3" width="2.6" height="2.6" fill="#fff" stroke="#111" stroke-width="0.7"/><path d="M6.5 11.5L11.5 3.5L14.5 5.5L9.5 13.5Z" fill="#f6d24c" stroke="#111" stroke-width="0.8"/><path d="M11.5 3.5L12.8 1.2L15.8 3.2L14.5 5.5Z" fill="#5a90d0" stroke="#111" stroke-width="0.7"/><path d="M6.5 11.5L6.2 14.5L9.5 13.5Z" fill="#111"/></g><g transform="translate(14.1,481.6) scale(1.3)"><path d="M3 2C5 3 1.5 6 3 8.5C4 10.5 1.5 12.5 3.5 14.5C5 15.5 7 15 8 14" fill="none" stroke="#111" stroke-width="0.9"/><path d="M7 12.5L11.5 2.5L15 4.5L10.5 14Z" fill="#f6d24c" stroke="#111" stroke-width="0.9"/><path d="M11.5 2.5L15 4.5L12 7Z" fill="#fff3b0"/><path d="M7 12.5L7.3 15.5L10.5 14Z" fill="#222"/></g><g transform="translate(14.1,515.6) scale(1.3)"><path d="M0.5 3C1.5 10 4 15 11.5 14.5C7.5 13 4 10.5 3.5 2.5Z" fill="#111"/><path d="M6.5 11.5L9.5 4L13.5 6L10.5 13Z" fill="#f6d24c" stroke="#111" stroke-width="0.9"/><path d="M9.5 4L11 1L15 3L13.5 6Z" fill="#5a7cc8" stroke="#111" stroke-width="0.7"/><path d="M12 2L14.5 3.3" stroke="#d02020" stroke-width="1"/><path d="M6.5 11.5L7.5 14.5L10.5 13Z" fill="#222"/></g><g transform="translate(14.5,551.0) scale(1.25)"><path d="M0.5 14.5L5.5 1.5H9L14 14.5H10.2L9.2 11.5H5.2L4.2 14.5Z M6 9H8.4L7.2 5Z" fill="#111" fill-rule="evenodd"/><path d="M14 2V15M13 2H15M13 15H15" stroke="#555" stroke-width="0.6"/></g><rect x="4" y="585" width="42" height="1" fill="#dcd8d4" /><g transform="translate(14.5,598.0) scale(1.25)"><rect x="1" y="1" width="14" height="14" fill="url(#ggrad)"/><path d="M4.5 4.5L11.5 11.5" stroke="#222" stroke-width="0.9"/><rect x="3" y="3" width="3" height="3" fill="#fff" stroke="#222" stroke-width="0.8"/><rect x="10" y="10" width="3" height="3" fill="#fff" stroke="#222" stroke-width="0.8"/></g><g transform="translate(14.5,632.0) scale(1.25)"><path d="M3 3L13.5 2.5L13 13.5L2.5 13Z" fill="url(#gmesh)"/><rect x="1.3" y="1.5" width="3" height="3" fill="#fff" stroke="#111" stroke-width="0.8"/><rect x="12" y="1" width="3" height="3" fill="#fff" stroke="#111" stroke-width="0.8"/><rect x="1" y="11.7" width="3" height="3" fill="#fff" stroke="#111" stroke-width="0.8"/><rect x="11.7" y="12" width="3" height="3" fill="#fff" stroke="#111" stroke-width="0.8"/></g><g transform="translate(14.1,666.6) scale(1.3)"><path d="M10 3.5L12.5 1A1.8 1.8 0 0 1 15 3.5L12.5 6Z" fill="#111"/><path d="M9.5 4.5L11.5 6.5" stroke="#111" stroke-width="1.6"/><path d="M10.2 5.8L3.5 12.5L3 14L4.5 13.5L11.2 6.8Z" fill="#bcd4e8" stroke="#222" stroke-width="0.8"/><circle cx="2.3" cy="15" r="1.1" fill="#4a80c0"/></g><g transform="translate(14.1,700.6) scale(1.3)"><ellipse cx="8" cy="14" rx="6.5" ry="1.8" fill="#90d890" stroke="#2a702a" stroke-width="0.7"/><path d="M4 11C3 12 3.5 13.5 5 14" fill="none" stroke="#40a040" stroke-width="1.6"/><path d="M5 4L13.5 2L14.5 10C13 11.5 8.5 12.5 7 11Z" fill="#6ea4d4" stroke="#222" stroke-width="0.9"/><ellipse cx="9.3" cy="3" rx="4.4" ry="1.5" transform="rotate(-13 9.3 3)" fill="#d8ecf8" stroke="#222" stroke-width="0.7"/><path d="M5 4C3.5 6 3.5 9 4 11" fill="none" stroke="#60c060" stroke-width="2"/></g><rect x="4" y="735" width="42" height="1" fill="#dcd8d4" /><path d="M24 767V777L29 772Z" fill="#2e3436"/><rect x="70" y="191" width="1509" height="583" fill="#ffffff" /><rect x="1579" y="191" width="19" height="583" fill="#cecece" /><rect x="1585" y="361" width="6" height="224" rx="3" fill="#7e8283"/><rect x="70" y="774" width="1509" height="18" fill="#cecece" /><rect x="73" y="780" width="1183" height="6" rx="3" fill="#7e8283"/><rect x="1580.5" y="775.5" width="16" height="16" rx="3" fill="#f8f8f8" stroke="#c8c0b8"/><path d="M1583.5 778L1595 784.5L1584.5 790Z" fill="url(#gcm)"/><rect x="1542" y="239" width="3" height="535" fill="#666666" /><rect x="1166" y="772" width="379" height="2" fill="#666666" /><rect x="1164.5" y="237.5" width="377" height="534" fill="#fff" stroke="#6a6a6a" stroke-width="1"/><path d="M1209 256.0H1532" stroke="#00ff00" stroke-width="2.3"/><path d="M1209 272.4H1532" stroke="#00ff00" stroke-width="2.3"/><path d="M1209 288.7H1532" stroke="#00ff00" stroke-width="2.3"/><path d="M1209 305.1H1532" stroke="#00ff00" stroke-width="2.3"/><path d="M1209 321.4H1532" stroke="#00ff00" stroke-width="2.3"/><path d="M1209 337.8H1532" stroke="#00ff00" stroke-width="2.3"/><path d="M1209 354.2H1532" stroke="#00ff00" stroke-width="2.3"/><path d="M1209 370.5H1532" stroke="#00ff00" stroke-width="2.3"/><path d="M1209 386.9H1532" stroke="#00ff00" stroke-width="2.3"/><path d="M1209 403.2H1532" stroke="#00ff00" stroke-width="2.3"/><path d="M1209 419.6H1532" stroke="#ff0000" stroke-width="2.3"/><path d="M1209 436.0H1532" stroke="#ff0000" stroke-width="2.3"/><path d="M1209 452.3H1532" stroke="#ff0000" stroke-width="2.3"/><path d="M1209 468.7H1532" stroke="#ff0000" stroke-width="2.3"/><path d="M1209 485.0H1532" stroke="#ff0000" stroke-width="2.3"/><path d="M1209 501.4H1532" stroke="#ff0000" stroke-width="2.3"/><path d="M1209 517.8H1532" stroke="#0000ff" stroke-width="2.3"/><path d="M1209 534.1H1532" stroke="#0000ff" stroke-width="2.3"/><path d="M1209 550.5H1532" stroke="#0000ff" stroke-width="2.3"/><path d="M1209 566.8H1532" stroke="#0000ff" stroke-width="2.3"/><path d="M1209 583.2H1532" stroke="#0000ff" stroke-width="2.3"/><path d="M1209 599.6H1532" stroke="#0000ff" stroke-width="2.3"/><path d="M1209 615.9H1532" stroke="#0000ff" stroke-width="2.3"/><path d="M1209 632.3H1532" stroke="#0000ff" stroke-width="2.3"/><path d="M1209 648.6H1532" stroke="#0000ff" stroke-width="2.3"/><path d="M1209 502.6H1532" stroke="#0000ff" stroke-width="2.3"/><path d="M1209 255.0V403.2" stroke="#00ff00" stroke-width="2.3"/><path d="M1209 403.2V501.4" stroke="#ff0000" stroke-width="2.3"/><path d="M1209 501.4V649.6" stroke="#0000ff" stroke-width="2.3"/><path d="M1532 255.0V403.2" stroke="#00ff00" stroke-width="2.3"/><path d="M1532 403.2V501.4" stroke="#ff0000" stroke-width="2.3"/><path d="M1532 501.4V649.6" stroke="#0000ff" stroke-width="2.3"/><path d="M1191 255.0V403.2" stroke="#00ff00" stroke-width="2.3"/><path d="M1191 403.2V501.4" stroke="#ff0000" stroke-width="2.3"/><path d="M1191 501.4V649.6" stroke="#0000ff" stroke-width="2.3"/><path d="M1206.5 255.0V403.2" stroke="#00ff00" stroke-width="2.3"/><path d="M1206.5 403.2V501.4" stroke="#ff0000" stroke-width="2.3"/><path d="M1206.5 501.4V649.6" stroke="#0000ff" stroke-width="2.3"/><path d="M1191 256.0H1206.5" stroke="#00ff00" stroke-width="2.3"/><path d="M1191 302.7H1206.5" stroke="#00ff00" stroke-width="2.3"/><path d="M1191 351.8H1206.5" stroke="#00ff00" stroke-width="2.3"/><path d="M1191 450.4H1206.5" stroke="#ff0000" stroke-width="2.3"/><path d="M1191 550.4H1206.5" stroke="#0000ff" stroke-width="2.3"/><path d="M1191 600.0H1206.5" stroke="#0000ff" stroke-width="2.3"/><path d="M1191 648.6H1206.5" stroke="#0000ff" stroke-width="2.3"/><path d="M1191 403.2H1206.5" stroke="#00ff00" stroke-width="2.3"/><path d="M1191 501.4H1206.5" stroke="#ff0000" stroke-width="2.3"/><rect x="1171.5" y="256" width="16.5" height="392.5" fill="none" stroke="#505050" stroke-width="1.6"/><text transform="translate(1183.2,449) rotate(-90)" font-size="11.5" fill="#000" textLength="149" lengthAdjust="spacingAndGlyphs">Wappen ist in  8/8 auf geteilt</text><text transform="translate(1183.2,540) rotate(-90)" font-size="11.5" fill="#000" textLength="90" lengthAdjust="spacingAndGlyphs">s  de des </text><text transform="translate(1203.5,390) rotate(-90)" font-size="12.5" fill="#000" textLength="107" lengthAdjust="spacingAndGlyphs">3/8 sind die Helmzier</text><text transform="translate(1203.5,498) rotate(-90)" font-size="12.5" fill="#000" textLength="95" lengthAdjust="spacingAndGlyphs">2/8 sind der Helm</text><text transform="translate(1203.5,622) rotate(-90)" font-size="12.5" fill="#000" textLength="105" lengthAdjust="spacingAndGlyphs">3/8 sind  der Schild</text><text x="1188.5" y="691.5" font-size="10.2" fill="#111" font-weight="normal" text-anchor="start" textLength="329" lengthAdjust="spacingAndGlyphs" >Diese Blatt  habe ich erstellt um gleich im richtigen Verhältnis zu arbeiten</text><text x="1227" y="702.8" font-size="10" fill="#111" font-weight="normal" text-anchor="start" textLength="252" lengthAdjust="spacingAndGlyphs" >es soll mir helfen von anfang an die Arbeit zu erleichten.</text><g><path d="M1306 286C1312 302 1313 330 1312 352C1311 378 1312 398 1320 426L1386 426C1398 420 1404 412 1406 406C1409 400 1410 380 1410 360C1410 332 1409 312 1413 299C1418 291 1425 289 1432 289L1431 271C1415 272 1402 282 1397 300C1393 316 1393 336 1393 352L1331 352C1331 322 1327 300 1317 280Z" fill="#ffff00" stroke="#000" stroke-width="0.9" stroke-linejoin="round" /><ellipse cx="1306.5" cy="275" rx="10" ry="16" fill="#ffff00" stroke="#000" stroke-width="0.9"/><path d="M1309 268C1314 275 1317 282 1321 292M1306 280C1310 282 1312 286 1313 290" fill="none" stroke="#000" stroke-width="0.8" stroke-linecap="round"/><ellipse cx="1433" cy="275" rx="10" ry="17" fill="#ffff00" stroke="#000" stroke-width="0.9"/><ellipse cx="1433" cy="275" rx="3.6" ry="11" fill="none" stroke="#000" stroke-width="0.8"/><path transform="translate(1359.6,368) rotate(-109)" d="M16 -6.5C26 -8 34 -4.5 41 0C34 4.5 26 8 16 6.5Z" fill="#ff0000" stroke="#000" stroke-width="0.7"/><path transform="translate(1359.6,368) rotate(-34)" d="M16 -6.5C26 -8 38 -4.5 45 0C38 4.5 26 8 16 6.5Z" fill="#ff0000" stroke="#000" stroke-width="0.7"/><path transform="translate(1359.6,368) rotate(33.5)" d="M16 -6.5C26 -8 41 -4.5 48 0C41 4.5 26 8 16 6.5Z" fill="#ff0000" stroke="#000" stroke-width="0.7"/><path transform="translate(1359.6,368) rotate(100.5)" d="M16 -6.5C26 -8 35 -4.5 42 0C35 4.5 26 8 16 6.5Z" fill="#ff0000" stroke="#000" stroke-width="0.7"/><path transform="translate(1359.6,368) rotate(173)" d="M16 -6.5C26 -8 37 -4.5 44 0C37 4.5 26 8 16 6.5Z" fill="#ff0000" stroke="#000" stroke-width="0.7"/><path transform="translate(1359.6,368) rotate(-70)" d="M0 0L20 -14.5C28 -20.5 39 -18.5 42 -9.5C43 -5 41 -2 40 0C41 2 43 5 42 9.5C39 18.5 28 20.5 20 14.5Z" fill="#ff0000" stroke="#000" stroke-width="0.8" stroke-linejoin="round"/><path transform="translate(1359.6,368) rotate(4)" d="M0 0L20 -14.5C28 -20.5 39 -18.5 42 -9.5C43 -5 41 -2 40 0C41 2 43 5 42 9.5C39 18.5 28 20.5 20 14.5Z" fill="#ff0000" stroke="#000" stroke-width="0.8" stroke-linejoin="round"/><path transform="translate(1359.6,368) rotate(63)" d="M0 0L20 -14.5C28 -20.5 39 -18.5 42 -9.5C43 -5 41 -2 40 0C41 2 43 5 42 9.5C39 18.5 28 20.5 20 14.5Z" fill="#ff0000" stroke="#000" stroke-width="0.8" stroke-linejoin="round"/><path transform="translate(1359.6,368) rotate(137)" d="M0 0L20 -14.5C28 -20.5 39 -18.5 42 -9.5C43 -5 41 -2 40 0C41 2 43 5 42 9.5C39 18.5 28 20.5 20 14.5Z" fill="#ff0000" stroke="#000" stroke-width="0.8" stroke-linejoin="round"/><path transform="translate(1359.6,368) rotate(213)" d="M0 0L20 -14.5C28 -20.5 39 -18.5 42 -9.5C43 -5 41 -2 40 0C41 2 43 5 42 9.5C39 18.5 28 20.5 20 14.5Z" fill="#ff0000" stroke="#000" stroke-width="0.8" stroke-linejoin="round"/><circle cx="1359.6" cy="368" r="9.5" fill="#ffff00" stroke="#000" stroke-width="0.8"/><path d="M1228.0 401.0C1227.8 399.8 1236.0 399.1 1239.0 399.0C1242.0 398.9 1251.5 397.9 1254.0 400.0C1256.5 402.1 1257.8 415.6 1260.0 417.0C1262.2 418.4 1270.1 413.3 1273.0 412.0C1275.9 410.7 1282.3 408.1 1285.0 406.0C1287.7 403.9 1295.0 394.0 1296.0 394.0C1297.0 394.0 1295.3 403.0 1294.0 406.0C1292.7 409.0 1288.2 416.5 1285.0 420.0C1281.8 423.5 1267.9 433.6 1267.0 436.0C1266.1 438.4 1275.2 439.4 1277.0 441.0C1278.8 442.6 1282.1 447.8 1282.0 450.0C1281.9 452.2 1276.3 457.7 1276.0 460.0C1275.7 462.3 1279.8 469.9 1279.0 470.0C1278.2 470.1 1271.8 462.4 1269.0 461.0C1266.2 459.6 1257.7 457.4 1255.0 458.0C1252.3 458.6 1247.2 463.7 1246.0 466.0C1244.8 468.3 1244.5 475.7 1245.0 478.0C1245.5 480.3 1246.5 483.9 1250.0 486.0C1253.5 488.1 1269.5 497.4 1275.0 496.0C1280.5 494.6 1293.3 478.9 1297.0 474.0C1300.7 469.1 1304.4 449.8 1307.0 454.0C1309.6 458.2 1316.9 501.6 1319.0 510.0C1321.1 518.4 1326.6 523.0 1325.0 526.0C1323.4 529.0 1309.7 534.5 1305.0 536.0C1300.3 537.5 1289.7 538.3 1285.0 539.0C1280.3 539.7 1269.2 541.0 1265.0 542.0C1260.8 543.0 1251.5 546.2 1249.0 548.0C1246.5 549.8 1245.6 557.0 1244.0 557.0C1242.4 557.0 1236.8 550.2 1235.0 548.0C1233.2 545.8 1229.5 537.8 1229.0 538.0C1228.5 538.2 1232.4 550.0 1231.0 550.0C1229.6 550.0 1220.5 540.3 1217.0 538.0C1213.5 535.7 1205.2 530.5 1201.0 530.0C1196.8 529.5 1183.0 535.4 1181.0 534.0C1179.0 532.6 1184.1 521.5 1184.0 518.0C1183.9 514.5 1182.7 506.2 1180.0 504.0C1177.3 501.8 1163.3 498.8 1161.0 499.0C1158.7 499.2 1161.0 506.6 1160.0 506.0C1159.0 505.4 1152.1 496.4 1152.0 494.0C1151.9 491.6 1156.3 485.9 1159.0 485.0C1161.7 484.1 1173.8 488.0 1175.0 486.0C1176.2 484.0 1169.2 471.7 1169.0 468.0C1168.8 464.3 1170.2 456.9 1173.0 454.0C1175.8 451.1 1190.4 443.0 1193.0 443.0C1195.6 443.0 1193.8 450.6 1195.0 454.0C1196.2 457.4 1200.2 468.3 1203.0 472.0C1205.8 475.7 1217.2 486.5 1219.0 486.0C1220.8 485.5 1217.5 473.4 1218.0 468.0C1218.5 462.6 1221.0 445.6 1223.0 440.0C1225.0 434.4 1232.9 423.6 1235.0 420.0C1237.1 416.4 1241.8 411.2 1241.0 409.0C1240.2 406.8 1228.2 402.2 1228.0 401.0Z" fill="#ffff00" stroke="#000" stroke-width="0.9" stroke-linejoin="round" fill-opacity="0.95"/><path d="M1294 400C1280 420 1255 440 1240 460C1230 475 1232 490 1233 500" fill="none" stroke="#000" stroke-width="0.8" stroke-linecap="round"/><path d="M1280 440C1270 438 1262 440 1255 446" fill="none" stroke="#000" stroke-width="0.8" stroke-linecap="round"/><path d="M1196 450C1200 470 1210 485 1222 494" fill="none" stroke="#000" stroke-width="0.8" stroke-linecap="round"/><path d="M1160 492C1170 489 1180 490 1188 492" fill="none" stroke="#000" stroke-width="0.8" stroke-linecap="round"/><path d="M1186 524C1200 518 1215 518 1222 522" fill="none" stroke="#000" stroke-width="0.8" stroke-linecap="round"/><path d="M1230 540C1245 532 1265 530 1275 528" fill="none" stroke="#000" stroke-width="0.8" stroke-linecap="round"/><path d="M1250.0 486.0C1249.5 486.8 1255.1 495.6 1257.0 498.0C1258.9 500.4 1266.2 508.0 1269.0 510.0C1271.8 512.0 1281.6 516.4 1285.0 518.0C1288.4 519.6 1301.8 526.6 1303.0 526.0C1304.2 525.4 1296.6 512.8 1297.0 512.0C1297.4 511.2 1305.4 516.5 1307.0 518.0C1308.6 519.5 1312.7 529.2 1313.0 527.0C1313.3 524.8 1309.5 500.8 1310.0 496.0C1310.5 491.2 1317.7 482.9 1318.0 479.0C1318.3 475.1 1314.1 459.8 1313.0 457.0C1311.9 454.2 1308.4 450.7 1307.0 451.0C1305.6 451.3 1300.7 457.5 1299.0 460.0C1297.3 462.5 1292.4 473.2 1290.0 476.0C1287.6 478.8 1277.8 486.6 1275.0 488.0C1272.2 489.4 1264.5 490.2 1262.0 490.0C1259.5 489.8 1250.5 485.2 1250.0 486.0Z" fill="#ff0000" stroke="#000" stroke-width="0.9" stroke-linejoin="round" /><path d="M1258 498C1270 506 1285 508 1298 500" fill="none" stroke="#000" stroke-width="0.8" stroke-linecap="round"/><path d="M1300 506C1303 495 1305 485 1306 475" fill="none" stroke="#000" stroke-width="0.8" stroke-linecap="round"/><path d="M1184.2 504.3C1183.3 503.0 1176.2 508.2 1173.3 510.6C1170.4 512.9 1164.6 518.9 1162.4 522.2C1160.3 525.5 1157.5 532.0 1157.0 535.4C1156.5 538.9 1157.2 545.0 1158.6 547.9C1159.9 550.8 1164.3 555.7 1167.1 557.2C1169.9 558.8 1176.0 559.7 1179.5 559.5C1183.1 559.3 1190.3 557.5 1193.5 555.7C1196.8 553.8 1201.8 547.9 1203.7 545.5C1205.5 543.2 1208.1 537.9 1207.5 537.8C1207.0 537.7 1201.9 543.7 1199.8 544.8C1197.6 545.8 1193.4 546.1 1191.2 545.5C1189.0 545.0 1185.0 542.5 1183.4 540.9C1181.9 539.2 1180.0 535.8 1179.5 533.1C1179.1 530.4 1179.7 524.5 1180.3 520.7C1180.9 516.8 1185.1 505.7 1184.2 504.3Z" fill="#ff0000" stroke="#000" stroke-width="0.9" stroke-linejoin="round" /><path d="M1171.0 520.7C1170.3 522.2 1167.4 526.8 1167.1 530.0C1166.8 533.2 1167.8 537.1 1169.4 540.1C1171.1 543.1 1174.4 546.1 1177.2 547.9C1180.1 549.7 1183.6 550.6 1186.5 551.0C1189.5 551.4 1193.7 550.3 1195.1 550.2" fill="none" stroke="#000" stroke-width="0.8" stroke-linecap="round"/><path d="M1262.5 390.0C1263.2 388.0 1265.2 381.9 1267.5 380.0C1269.8 378.1 1276.3 376.1 1280.0 376.0C1283.7 375.9 1292.5 377.8 1295.0 379.0C1297.5 380.2 1298.9 382.6 1299.0 385.0C1299.1 387.4 1297.2 394.3 1296.0 397.0C1294.8 399.7 1291.8 403.8 1290.0 405.0C1288.2 406.2 1283.7 407.0 1282.5 406.0C1281.3 405.0 1282.1 398.8 1281.0 397.5C1279.9 396.2 1275.8 395.5 1274.0 396.0C1272.2 396.5 1269.0 401.1 1267.5 401.0C1266.0 400.9 1263.2 396.5 1262.5 395.0C1261.8 393.5 1261.8 392.0 1262.5 390.0Z" fill="#ff0000" stroke="#000" stroke-width="0.9" stroke-linejoin="round" /><path d="M1268 386C1276 380 1286 380 1294 384" fill="none" stroke="#000" stroke-width="0.8" stroke-linecap="round"/><path d="M1383.0 452.8C1385.2 452.6 1393.1 460.7 1396.0 462.2C1398.9 463.6 1408.7 466.9 1411.9 467.2C1415.1 467.6 1425.9 466.6 1427.8 465.8C1429.7 464.9 1430.5 460.4 1430.7 458.6C1430.9 456.7 1431.1 448.9 1429.9 447.0C1428.8 445.1 1420.8 440.6 1419.1 439.8C1417.5 438.9 1414.0 439.1 1413.3 438.3C1412.7 437.6 1412.2 433.6 1412.6 432.6C1413.0 431.5 1416.3 428.0 1417.7 427.5C1419.0 427.0 1425.3 428.4 1426.3 427.5C1427.4 426.6 1428.2 420.8 1428.5 418.1C1428.8 415.4 1428.6 401.5 1429.2 400.8C1429.9 400.1 1433.7 409.3 1435.0 410.9C1436.3 412.5 1440.6 417.1 1442.2 416.7C1443.8 416.2 1449.2 408.1 1450.9 406.6C1452.6 405.0 1457.7 400.8 1459.6 400.8C1461.4 400.8 1468.6 405.4 1469.7 406.6C1470.8 407.7 1471.1 411.6 1470.4 412.3C1469.7 413.1 1463.7 412.6 1462.4 413.8C1461.2 414.9 1459.3 421.0 1458.1 423.9C1457.0 426.8 1452.5 439.1 1450.9 442.7C1449.3 446.3 1444.2 456.7 1442.2 460.0C1440.2 463.3 1430.1 474.7 1430.7 475.9C1431.2 477.0 1445.3 473.6 1448.0 471.6C1450.7 469.5 1456.7 455.7 1458.1 455.7C1459.6 455.7 1460.9 470.7 1462.4 471.6C1464.0 472.4 1472.7 466.4 1474.0 464.3C1475.3 462.3 1474.7 451.9 1475.4 451.3C1476.2 450.8 1480.8 456.1 1481.2 458.6C1481.7 461.0 1480.2 473.6 1479.8 475.9C1479.3 478.2 1476.3 480.5 1476.9 481.7C1477.5 482.8 1483.5 485.7 1485.6 487.4C1487.6 489.2 1497.1 498.0 1497.1 499.0C1497.1 500.0 1488.2 498.0 1485.6 497.6C1483.0 497.1 1473.7 495.4 1471.1 494.7C1468.5 493.9 1461.0 489.9 1459.6 490.3C1458.1 490.8 1457.5 496.3 1456.7 499.0C1455.8 501.7 1452.3 516.8 1450.9 517.8C1449.4 518.8 1443.4 509.1 1442.2 509.1C1441.1 509.1 1440.5 517.3 1439.3 517.8C1438.2 518.2 1432.4 514.7 1430.7 513.4C1428.9 512.1 1422.6 504.6 1422.0 504.8C1421.4 504.9 1425.9 513.9 1424.9 514.9C1423.9 515.9 1414.3 515.8 1411.9 514.9C1409.4 514.0 1402.4 508.4 1400.3 506.2C1398.3 504.1 1393.3 495.2 1391.7 493.2C1390.1 491.2 1386.0 487.7 1384.4 486.0C1382.9 484.3 1376.8 478.1 1375.8 475.9C1374.8 473.7 1373.6 466.6 1374.3 464.3C1375.1 462.0 1380.8 453.0 1383.0 452.8Z" fill="#ffff00" stroke="#000" stroke-width="0.9" stroke-linejoin="round" /><path d="M1385.9 484.6C1390.5 483.1 1403.9 477.3 1413.3 475.9C1422.7 474.4 1432.6 474.4 1442.2 475.9C1451.9 477.3 1463.4 481.2 1471.1 484.6C1478.8 487.9 1485.6 494.2 1488.4 496.1" fill="none" stroke="#000" stroke-width="0.8" stroke-linecap="round"/><path d="M1403.2 488.9C1407.3 488.6 1418.9 486.7 1427.8 487.4C1436.7 488.2 1451.9 492.3 1456.7 493.2" fill="none" stroke="#000" stroke-width="0.8" stroke-linecap="round"/><path d="M1456.7 409.4C1454.7 413.1 1448.5 423.4 1445.1 431.1C1441.7 438.8 1440.5 447.7 1436.4 455.7C1432.4 463.6 1423.2 474.9 1420.6 478.8" fill="none" stroke="#000" stroke-width="0.8" stroke-linecap="round"/><path d="M1427.8 478.8C1431.4 478.3 1442.7 476.4 1449.4 475.9C1456.2 475.4 1465.1 475.9 1468.2 475.9" fill="none" stroke="#000" stroke-width="0.8" stroke-linecap="round"/><path d="M1404.7 499.0C1406.1 500.9 1410.2 507.9 1413.3 510.6C1416.5 513.2 1421.8 514.2 1423.4 514.9" fill="none" stroke="#000" stroke-width="0.8" stroke-linecap="round"/><path d="M1419.0 397.5C1419.5 394.8 1420.4 390.0 1422.5 387.5C1424.6 385.0 1431.9 381.3 1435.0 379.0C1438.1 376.7 1444.7 369.2 1446.0 370.0C1447.3 370.8 1444.1 382.0 1445.0 385.0C1445.9 388.0 1452.2 390.2 1452.5 392.5C1452.8 394.8 1449.2 401.8 1447.5 402.5C1445.8 403.2 1442.0 398.2 1440.0 397.5C1438.0 396.8 1434.2 396.5 1432.5 397.5C1430.8 398.5 1428.5 402.3 1427.5 405.0C1426.5 407.7 1426.1 417.2 1425.0 417.5C1423.9 417.8 1419.8 410.2 1419.0 407.5C1418.2 404.8 1418.5 400.2 1419.0 397.5Z" fill="#ff0000" stroke="#000" stroke-width="0.9" stroke-linejoin="round" /><path d="M1424 400C1428 390 1436 385 1442 388" fill="none" stroke="#000" stroke-width="0.8" stroke-linecap="round"/><path d="M1459.6 413.8C1460.4 412.1 1464.0 410.9 1465.3 410.9C1466.6 410.9 1469.3 412.5 1469.7 413.8C1470.1 415.1 1469.2 418.9 1468.2 421.0C1467.2 423.1 1463.5 429.3 1462.4 429.7C1461.3 430.1 1460.0 426.0 1459.6 423.9C1459.2 421.8 1458.8 415.5 1459.6 413.8Z" fill="#ff0000" stroke="#000" stroke-width="0.7" stroke-linejoin="round" /><path d="M1458.0 489.5C1459.8 489.7 1471.7 496.4 1474.9 499.0C1478.0 501.6 1487.3 512.5 1489.6 515.9C1491.9 519.2 1496.5 530.2 1498.1 532.7C1499.6 535.3 1505.4 540.3 1505.4 541.2C1505.4 542.0 1499.3 539.3 1498.1 541.2C1496.8 543.1 1493.8 556.4 1492.8 560.2C1491.7 564.0 1487.8 575.8 1487.5 579.2C1487.2 582.5 1488.9 591.5 1489.6 593.9C1490.4 596.4 1495.5 602.4 1494.9 603.4C1494.3 604.5 1485.3 604.8 1483.3 604.5C1481.3 604.2 1476.3 600.0 1474.9 600.3C1473.4 600.5 1469.8 605.1 1468.5 606.6C1467.3 608.1 1463.5 613.1 1462.2 615.0C1460.9 616.9 1455.9 627.3 1455.9 625.6C1455.9 623.9 1460.4 603.4 1462.2 598.1C1464.0 592.9 1472.3 576.8 1473.8 572.8C1475.3 568.8 1477.5 559.1 1477.0 558.1C1476.4 557.0 1470.0 560.8 1468.5 562.3C1467.0 563.8 1463.1 569.9 1462.2 572.8C1461.2 575.8 1460.1 591.6 1459.0 591.8C1458.0 592.0 1452.6 578.1 1451.6 574.9C1450.7 571.8 1450.2 562.7 1449.5 560.2C1448.9 557.6 1447.0 551.7 1445.3 549.6C1443.6 547.5 1434.6 541.2 1432.7 539.1C1430.8 537.0 1426.8 530.4 1426.3 528.5C1425.9 526.6 1427.4 520.1 1428.4 520.1C1429.5 520.1 1434.6 527.5 1436.9 528.5C1439.2 529.6 1449.3 531.1 1451.6 530.6C1454.0 530.2 1459.7 526.2 1460.1 524.3C1460.5 522.4 1456.2 514.4 1455.9 511.6C1455.5 508.9 1456.7 499.1 1456.9 496.9C1457.1 494.7 1456.2 489.3 1458.0 489.5Z" fill="#ff0000" stroke="#000" stroke-width="0.9" stroke-linejoin="round" /><path d="M1462 500C1478 520 1488 545 1485 575C1484 590 1486 598 1490 602" fill="none" stroke="#000" stroke-width="0.8" stroke-linecap="round"/><path d="M1436 530C1448 536 1458 534 1466 528" fill="none" stroke="#000" stroke-width="0.8" stroke-linecap="round"/><path d="M1472 540C1462 555 1458 570 1460 588" fill="none" stroke="#000" stroke-width="0.8" stroke-linecap="round"/><path d="M1455.9 625.6C1458.7 623.6 1473.9 614.8 1477.0 615.0C1480.0 615.3 1481.7 624.7 1482.2 627.7C1482.7 630.6 1481.9 638.4 1481.2 640.3C1480.4 642.3 1475.7 642.8 1475.9 644.6C1476.2 646.3 1483.7 652.9 1483.3 655.1C1482.9 657.3 1475.2 662.8 1472.7 663.5C1470.3 664.3 1464.4 663.4 1462.2 661.4C1460.0 659.5 1454.9 650.1 1453.8 646.7C1452.6 643.2 1452.5 634.4 1452.7 631.9C1452.9 629.4 1453.0 627.5 1455.9 625.6Z" fill="#ffff00" stroke="#000" stroke-width="0.9" stroke-linejoin="round" /><path d="M1457 634C1458 648 1464 656 1474 658" fill="none" stroke="#000" stroke-width="0.8" stroke-linecap="round"/><path d="M1462 640C1468 644 1474 640 1478 630" fill="none" stroke="#000" stroke-width="0.8" stroke-linecap="round"/><clipPath id="shclip"><path d="M1273.5 562.3L1384.4 492.2C1400 515 1425 545 1436 570C1443 590 1443 612 1436 630C1426 648 1402 661 1377 661.5C1356 661 1338 650 1322.5 632.3Z"/></clipPath><path d="M1273.5 562.3L1384.4 492.2C1400 515 1425 545 1436 570C1443 590 1443 612 1436 630C1426 648 1402 661 1377 661.5C1356 661 1338 650 1322.5 632.3Z" fill="#ffff00"/><path d="M1273.5 562.3L1294.5 566.4L1292.8 578.1L1314.9 582.2L1316.7 571.7L1340.0 576.3L1338.8 588.0L1361.0 592.1L1362.8 581.0L1386.1 586.3L1384.9 597.3L1406.5 601.4L1408.3 590.9L1431.6 595.6L1429.8 606.7L1456.7 611.3L1460.0 470.0L1380.0 470.0L1260.0 560.0Z" fill="#ff0000" stroke="#000" stroke-width="0.8" clip-path="url(#shclip)"/><path d="M1347.5 527.7L1355.1 526.3L1359.2 531.2L1360.6 522.1L1360.6 513.1L1365.0 516.6L1369.7 511.3L1370.2 504.9L1375.5 511.3L1381.9 501.4L1384.8 508.4L1394.1 510.7L1393.6 516.0L1388.9 518.3L1395.3 524.7L1400.0 525.9L1403.5 526.5L1406.4 537.0L1404.6 545.2L1400.0 539.3L1390.6 541.7L1390.6 546.3L1405.8 549.8L1426.8 558.0L1430.3 561.5L1425.6 560.9L1400.0 559.1L1411.6 565.0L1429.1 574.3L1418.6 573.1L1409.3 569.6L1411.6 583.6L1402.3 576.6L1396.5 590.6L1391.8 575.5L1386.0 582.5L1380.2 569.6L1376.7 576.6L1368.5 569.6L1366.2 576.6L1354.5 579.0L1365.0 567.3L1374.9 552.1L1351.6 560.3L1342.8 569.6L1337.0 565.0L1346.3 558.0L1344.0 554.5L1356.8 542.8L1358.0 534.7L1351.0 533.5Z" fill="#ffff00" stroke="#000" stroke-width="1.1" stroke-linejoin="round" /><path d="M1368.5 524.2C1369.6 522.6 1374.5 516.4 1376.7 514.8C1378.8 513.3 1383.0 512.2 1384.8 512.5C1386.7 512.8 1390.5 515.9 1390.6 517.2C1390.8 518.4 1387.5 520.7 1386.0 521.8C1384.4 522.9 1381.3 524.7 1379.0 525.3C1376.7 525.9 1369.9 526.6 1368.5 526.5C1367.1 526.3 1367.4 525.7 1368.5 524.2Z" fill="#ff0000" stroke="#000" stroke-width="0.7" stroke-linejoin="round" /><path d="M1387.1 538.2C1386.5 536.9 1389.4 532.9 1390.6 532.3C1391.9 531.7 1395.1 532.9 1396.5 533.5C1397.9 534.1 1400.4 535.6 1401.1 537.0C1401.9 538.4 1403.1 543.4 1402.3 544.0C1401.5 544.6 1397.3 542.4 1395.3 541.7C1393.3 540.9 1387.8 539.4 1387.1 538.2Z" fill="#ff0000" stroke="#000" stroke-width="0.8" stroke-linejoin="round" /><ellipse cx="1381.3" cy="535.2" rx="2.8" ry="2.2" fill="#000"/><circle cx="1361.5" cy="540" r="1.7" fill="#fff" stroke="#000" stroke-width="0.7"/><path d="M1321.3 610.2L1328.3 604.3L1335.3 603.2L1342.3 597.3L1351.7 593.8L1357.5 598.5L1356.3 604.3L1349.3 609.0L1347.0 611.3L1354.0 610.2L1363.3 604.3L1366.8 606.7L1358.7 611.3L1362.2 617.2L1358.7 619.5L1351.7 624.2L1369.2 623.0L1379.7 616.0L1383.2 603.2L1389.0 611.3L1385.5 625.3L1413.5 603.2L1415.8 613.7L1399.5 631.2L1428.7 616.0L1425.2 632.3L1407.7 644.0L1386.7 647.5L1403.0 652.2L1389.0 658.0L1372.7 659.2L1361.0 646.3L1365.7 658.0L1351.7 652.2L1342.3 641.7L1340.0 644.0L1333.0 641.7L1335.3 634.7L1327.2 637.0L1329.5 628.8L1321.3 627.7L1324.8 620.7L1321.3 616.0Z" fill="#ff0000" stroke="#000" stroke-width="0.9" stroke-linejoin="round" clip-path="url(#shclip)"/><circle cx="1339.2" cy="605.5" r="1.6" fill="#fff" stroke="#000" stroke-width="0.7"/><path d="M1273.5 562.3L1384.4 492.2C1400 515 1425 545 1436 570C1443 590 1443 612 1436 630C1426 648 1402 661 1377 661.5C1356 661 1338 650 1322.5 632.3Z" fill="none" stroke="#000" stroke-width="1"/><path d="M1305.6 440.1L1311.8 432.3L1327.3 426.9L1341.3 428.5L1360.0 435.5L1364.7 443.2L1366.2 461.9L1374.0 461.9L1375.6 479.0L1383.4 485.2L1370.9 494.6L1352.2 507.0L1336.7 517.9L1322.7 524.1L1313.3 517.9L1310.2 496.1L1318.0 479.0L1313.3 457.2L1305.6 444.8Z" fill="url(#ghelm)" stroke="#000" stroke-width="0.9" stroke-linejoin="round"/><path d="M1310.2 438.6C1311.6 437.4 1321.3 434.8 1325.8 434.7C1330.3 434.5 1351.6 436.5 1355.3 437.0C1359.1 437.6 1365.0 439.3 1363.1 440.1C1361.3 440.9 1341.8 444.2 1336.7 444.8C1331.5 445.4 1314.4 447.0 1311.8 446.3C1309.1 445.7 1308.8 439.7 1310.2 438.6Z" fill="#5a0008" stroke="#000" stroke-width="0.6"/><path d="M1313.3 457.2L1318.0 479.0L1325.8 499.2L1372.5 477.5L1375.6 479.0" fill="none" stroke="#000" stroke-width="0.7" stroke-linecap="round"/><path d="M1325.8 499.2L1322.7 524.1" fill="none" stroke="#000" stroke-width="0.7" stroke-linecap="round"/><path d="M1311.8 446.3L1336.7 446.3L1364.7 443.2" fill="none" stroke="#000" stroke-width="0.7" stroke-linecap="round"/><path d="M1323.5 482.1C1322.3 479.6 1320.8 471.4 1321.1 468.1C1321.4 464.8 1324.5 458.9 1325.8 457.2C1327.0 455.6 1330.2 455.1 1330.5 455.7C1330.7 456.3 1327.5 460.2 1327.3 461.9C1327.1 463.6 1329.0 466.7 1328.9 468.1C1328.8 469.6 1326.5 470.3 1326.6 472.8C1326.7 475.3 1330.1 485.6 1329.7 486.8C1329.3 488.0 1324.6 484.6 1323.5 482.1Z" fill="#b07418" stroke="#6a4400" stroke-width="0.4"/><path d="M1328.9 488.4C1328.6 486.3 1329.6 478.8 1330.5 475.9C1331.3 473.0 1333.9 467.6 1335.1 466.6C1336.4 465.5 1339.8 467.3 1339.8 468.1C1339.8 469.0 1335.8 470.9 1335.1 472.8C1334.4 474.7 1334.7 479.6 1334.3 482.1C1334.0 484.6 1333.5 490.6 1332.8 491.5C1332.1 492.3 1329.2 490.4 1328.9 488.4Z" fill="#b07418" stroke="#6a4400" stroke-width="0.4"/><path d="M1332.0 494.6C1332.2 492.8 1335.2 485.0 1336.7 482.1C1338.1 479.2 1341.7 473.4 1342.9 472.8C1344.1 472.2 1346.1 476.6 1346.0 477.5C1345.9 478.3 1343.0 477.8 1342.1 479.0C1341.3 480.3 1340.7 484.6 1339.8 486.8C1338.9 489.0 1336.2 494.3 1335.1 495.4C1334.1 496.4 1331.8 496.3 1332.0 494.6Z" fill="#b07418" stroke="#6a4400" stroke-width="0.4"/><path d="M1314.9 491.5C1315.2 493.5 1315.4 500.0 1316.5 503.9C1317.5 507.8 1318.0 512.5 1321.1 514.8C1324.2 517.1 1330.5 517.7 1335.1 517.9C1339.8 518.2 1345.2 519.0 1349.1 516.4C1353.0 513.8 1356.9 504.7 1358.5 502.4" fill="none" stroke="#8a6420" stroke-width="4" stroke-opacity="0.55" stroke-dasharray="2 1.5"/><circle cx="1358.2" cy="462.7" r="0.7" fill="#111"/><circle cx="1357.1" cy="465.2" r="0.7" fill="#111"/><circle cx="1354.6" cy="466.3" r="0.7" fill="#111"/><circle cx="1352.1" cy="465.2" r="0.7" fill="#111"/><circle cx="1351.0" cy="462.7" r="0.7" fill="#111"/><circle cx="1352.1" cy="460.2" r="0.7" fill="#111"/><circle cx="1354.6" cy="459.1" r="0.7" fill="#111"/><circle cx="1357.1" cy="460.2" r="0.7" fill="#111"/><g fill="#c08a30" stroke="#5a3a00" stroke-width="0.3"><circle cx="1370.9" cy="468.1" r="1.1"/><circle cx="1370.9" cy="479" r="1.1"/></g><path d="M1374 488L1380 497M1370 492L1374 500" stroke="#8a5a30" stroke-width="0.5"/><path d="M1313.0 420.0C1314.2 418.3 1326.3 412.4 1330.0 411.0C1333.7 409.6 1346.3 406.2 1350.0 406.0C1353.7 405.8 1363.6 407.4 1367.0 409.0C1370.4 410.6 1380.6 419.1 1384.0 422.0C1387.4 424.9 1397.6 435.3 1401.0 438.0C1404.4 440.7 1414.9 446.5 1418.0 449.0C1421.1 451.5 1431.7 461.2 1432.0 463.0C1432.3 464.8 1423.8 467.0 1421.0 467.0C1418.2 467.0 1407.5 464.6 1404.5 463.2C1401.5 461.8 1393.3 454.7 1391.0 453.0C1388.7 451.3 1382.4 446.0 1381.0 446.3C1379.6 446.6 1378.3 454.4 1377.4 456.4C1376.5 458.4 1373.4 467.2 1372.3 466.6C1371.2 466.0 1367.2 453.1 1366.0 450.0C1364.8 446.9 1362.5 437.6 1360.0 435.5C1357.5 433.4 1344.3 429.4 1341.0 428.5C1337.7 427.6 1329.3 427.1 1327.0 427.0C1324.7 426.9 1319.4 428.7 1318.0 428.0C1316.6 427.3 1311.8 421.7 1313.0 420.0Z" fill="#ff0000" stroke="#000" stroke-width="0.9" stroke-linejoin="round" /><path d="M1372 418C1385 432 1400 450 1420 460" fill="none" stroke="#000" stroke-width="0.8" stroke-linecap="round"/><path d="M1336 418C1344 424 1350 428 1352 432" fill="none" stroke="#000" stroke-width="0.8" stroke-linecap="round"/><path d="M1302.4 419.9C1303.5 417.6 1311.0 410.0 1311.8 409.8C1312.6 409.6 1308.5 416.2 1308.7 418.3C1308.9 420.5 1311.7 424.6 1313.3 426.1C1315.0 427.7 1321.5 429.4 1321.1 430.0C1320.7 430.6 1312.5 431.2 1310.2 430.8C1307.9 430.4 1305.0 428.3 1304.0 426.9C1303.0 425.4 1301.4 422.2 1302.4 419.9Z" fill="#ffff00" stroke="#000" stroke-width="0.8" stroke-linejoin="round" /></g><rect x="1151.7" y="257" width="355.8" height="410.5" fill="none" stroke="#3c3cdc" stroke-width="1" stroke-dasharray="4 4" stroke-dashoffset="4"/><path transform="translate(1146,251) rotate(45)" d="M-7 0L-2.2 -4.8V-2.2H2.2V-4.8L7 0L2.2 4.8V2.2H-2.2V4.8Z" fill="#000" stroke="#000" stroke-width="0.5"/><path transform="translate(1513,251) rotate(-45)" d="M-7 0L-2.2 -4.8V-2.2H2.2V-4.8L7 0L2.2 4.8V2.2H-2.2V4.8Z" fill="#000" stroke="#000" stroke-width="0.5"/><path transform="translate(1146,673) rotate(-45)" d="M-7 0L-2.2 -4.8V-2.2H2.2V-4.8L7 0L2.2 4.8V2.2H-2.2V4.8Z" fill="#000" stroke="#000" stroke-width="0.5"/><path transform="translate(1513,673) rotate(45)" d="M-7 0L-2.2 -4.8V-2.2H2.2V-4.8L7 0L2.2 4.8V2.2H-2.2V4.8Z" fill="#000" stroke="#000" stroke-width="0.5"/><path transform="translate(1329,251) rotate(90)" d="M-7 0L-2.2 -4.8V-2.2H2.2V-4.8L7 0L2.2 4.8V2.2H-2.2V4.8Z" fill="#000" stroke="#000" stroke-width="0.5"/><path transform="translate(1329,673) rotate(90)" d="M-7 0L-2.2 -4.8V-2.2H2.2V-4.8L7 0L2.2 4.8V2.2H-2.2V4.8Z" fill="#000" stroke="#000" stroke-width="0.5"/><path transform="translate(1146,462) rotate(0)" d="M-7 0L-2.2 -4.8V-2.2H2.2V-4.8L7 0L2.2 4.8V2.2H-2.2V4.8Z" fill="#000" stroke="#000" stroke-width="0.5"/><path transform="translate(1513,462) rotate(0)" d="M-7 0L-2.2 -4.8V-2.2H2.2V-4.8L7 0L2.2 4.8V2.2H-2.2V4.8Z" fill="#000" stroke="#000" stroke-width="0.5"/><rect x="1325" y="255" width="8" height="2" fill="#e000e0"/><rect x="1508" y="255" width="7" height="2" fill="#e000e0"/><rect x="0" y="791" width="70" height="1" fill="#ffffff" /><rect x="0" y="792" width="1564" height="21" fill="#000000" /><rect x="-11" y="793" width="18" height="19" fill="#008000" /><rect x="8" y="793" width="18" height="19" fill="#00aa00" /><rect x="27" y="793" width="18" height="19" fill="#00d400" /><rect x="46" y="793" width="18" height="19" fill="#00ff00" /><rect x="65" y="793" width="18" height="19" fill="#2aff2a" /><rect x="84" y="793" width="18" height="19" fill="#55ff55" /><rect x="103" y="793" width="18" height="19" fill="#80ff80" /><rect x="122" y="793" width="18" height="19" fill="#aaffaa" /><rect x="141" y="793" width="18" height="19" fill="#d5ffd5" /><rect x="160" y="793" width="18" height="19" fill="#0d260d" /><rect x="179" y="793" width="18" height="19" fill="#1a4d1a" /><rect x="198" y="793" width="18" height="19" fill="#217821" /><rect x="217" y="793" width="18" height="19" fill="#2c9c2c" /><rect x="236" y="793" width="18" height="19" fill="#3ac83a" /><rect x="255" y="793" width="18" height="19" fill="#62d562" /><rect x="274" y="793" width="18" height="19" fill="#8ce08c" /><rect x="293" y="793" width="18" height="19" fill="#b3eab3" /><rect x="312" y="793" width="18" height="19" fill="#d7f5d7" /><rect x="331" y="793" width="18" height="19" fill="#1e231e" /><rect x="350" y="793" width="18" height="19" fill="#374837" /><rect x="369" y="793" width="18" height="19" fill="#567056" /><rect x="388" y="793" width="18" height="19" fill="#789678" /><rect x="407" y="793" width="18" height="19" fill="#98af98" /><rect x="426" y="793" width="18" height="19" fill="#b8cab8" /><rect x="445" y="793" width="18" height="19" fill="#dae3da" /><rect x="464" y="793" width="18" height="19" fill="#002b11" /><rect x="483" y="793" width="18" height="19" fill="#005522" /><rect x="502" y="793" width="18" height="19" fill="#008033" /><rect x="521" y="793" width="18" height="19" fill="#00aa44" /><rect x="540" y="793" width="18" height="19" fill="#00d455" /><rect x="559" y="793" width="18" height="19" fill="#00ff66" /><rect x="578" y="793" width="18" height="19" fill="#2aff7f" /><rect x="597" y="793" width="18" height="19" fill="#55ff99" /><rect x="616" y="793" width="18" height="19" fill="#80ffb3" /><rect x="635" y="793" width="18" height="19" fill="#aaffcc" /><rect x="654" y="793" width="18" height="19" fill="#d5ffe6" /><rect x="673" y="793" width="18" height="19" fill="#0d2617" /><rect x="692" y="793" width="18" height="19" fill="#1a4d2e" /><rect x="711" y="793" width="18" height="19" fill="#217844" /><rect x="730" y="793" width="18" height="19" fill="#2c9c59" /><rect x="749" y="793" width="18" height="19" fill="#3ac873" /><rect x="768" y="793" width="18" height="19" fill="#62d590" /><rect x="787" y="793" width="18" height="19" fill="#8ce0ae" /><rect x="806" y="793" width="18" height="19" fill="#b3eac9" /><rect x="825" y="793" width="18" height="19" fill="#d7f5e3" /><rect x="844" y="793" width="18" height="19" fill="#1e2320" /><rect x="863" y="793" width="18" height="19" fill="#37483e" /><rect x="882" y="793" width="18" height="19" fill="#567060" /><rect x="901" y="793" width="18" height="19" fill="#789684" /><rect x="920" y="793" width="18" height="19" fill="#98afa1" /><rect x="939" y="793" width="18" height="19" fill="#b8cabf" /><rect x="958" y="793" width="18" height="19" fill="#dae3de" /><rect x="977" y="793" width="18" height="19" fill="#002b22" /><rect x="996" y="793" width="18" height="19" fill="#005544" /><rect x="1015" y="793" width="18" height="19" fill="#008066" /><rect x="1034" y="793" width="18" height="19" fill="#00aa88" /><rect x="1053" y="793" width="18" height="19" fill="#00d4aa" /><rect x="1072" y="793" width="18" height="19" fill="#00ffcc" /><rect x="1091" y="793" width="18" height="19" fill="#2affd4" /><rect x="1110" y="793" width="18" height="19" fill="#55ffdd" /><rect x="1129" y="793" width="18" height="19" fill="#80ffe6" /><rect x="1148" y="793" width="18" height="19" fill="#aaffee" /><rect x="1167" y="793" width="18" height="19" fill="#d5fff7" /><rect x="1186" y="793" width="18" height="19" fill="#0d2621" /><rect x="1205" y="793" width="18" height="19" fill="#1a4d43" /><rect x="1224" y="793" width="18" height="19" fill="#217867" /><rect x="1243" y="793" width="18" height="19" fill="#2c9c86" /><rect x="1262" y="793" width="18" height="19" fill="#3ac8ac" /><rect x="1281" y="793" width="18" height="19" fill="#62d5be" /><rect x="1300" y="793" width="18" height="19" fill="#8ce0cf" /><rect x="1319" y="793" width="18" height="19" fill="#b3eadf" /><rect x="1338" y="793" width="18" height="19" fill="#d7f5ef" /><rect x="1357" y="793" width="18" height="19" fill="#1e2322" /><rect x="1376" y="793" width="18" height="19" fill="#374845" /><rect x="1395" y="793" width="18" height="19" fill="#56706b" /><rect x="1414" y="793" width="18" height="19" fill="#789690" /><rect x="1433" y="793" width="18" height="19" fill="#98afaa" /><rect x="1452" y="793" width="18" height="19" fill="#b8cac6" /><rect x="1471" y="793" width="18" height="19" fill="#dae3e1" /><rect x="1490" y="793" width="18" height="19" fill="#00222b" /><rect x="1509" y="793" width="18" height="19" fill="#004455" /><rect x="1528" y="793" width="18" height="19" fill="#006680" /><rect x="1547" y="793" width="17" height="19" fill="#0088aa" /><rect x="0" y="813" width="1564" height="13" fill="#cecece" /><rect x="599" y="817" width="292" height="6" rx="3" fill="#7e8283"/><rect x="1564" y="792" width="36" height="34" fill="#f6f5f4" /><path d="M1585 803.5V813L1579.5 808.2Z" fill="#2e3436"/><rect x="0" y="826" width="1600" height="34" fill="#f6f5f4" /><text x="2" y="839" font-size="12" fill="#2e3436" font-weight="normal" text-anchor="start" textLength="45" lengthAdjust="spacingAndGlyphs" >Füllung:</text><text x="49" y="839" font-size="12" fill="#2e3436" font-weight="bold" text-anchor="start" textLength="58" lengthAdjust="spacingAndGlyphs" >Ungesetzt</text><text x="2" y="856" font-size="12" fill="#2e3436" font-weight="normal" text-anchor="start" textLength="39" lengthAdjust="spacingAndGlyphs" >Kontur:</text><text x="49" y="856" font-size="12" fill="#2e3436" font-weight="bold" text-anchor="start" textLength="58" lengthAdjust="spacingAndGlyphs" >Ungesetzt</text><text x="112" y="856" font-size="12" fill="#2e3436" font-weight="normal" text-anchor="start" textLength="25" lengthAdjust="spacingAndGlyphs" >1,00</text><text x="141" y="847" font-size="12" fill="#2e3436" font-weight="normal" text-anchor="start" textLength="12" lengthAdjust="spacingAndGlyphs" >O:</text><rect x="155.5" y="827" width="66.5" height="32" rx="5" fill="#fff" stroke="#cdc7c2"/><rect x="188" y="828" width="1" height="30" fill="#ebe9e6" /><rect x="205" y="828" width="1" height="30" fill="#ebe9e6" /><text x="158" y="848" font-size="12.5" fill="#000" font-weight="normal" text-anchor="start" textLength="22" lengthAdjust="spacingAndGlyphs" >100</text><rect x="192" y="841.5" width="10" height="1.8" fill="#2e3436" /><rect x="208" y="841.5" width="10" height="1.8" fill="#c8c8c8" /><rect x="212.1" y="837.4" width="1.8" height="10" fill="#c8c8c8" /><rect x="225" y="826" width="1" height="34" fill="#dad6d2" /><g transform="translate(237.0,835.0) scale(1.0)"><path d="M1 8C3 4.5 5.5 3 8 3S13 4.5 15 8C13 11.5 10.5 13 8 13S3 11.5 1 8Z" fill="#fff" stroke="#111" stroke-width="1.2"/><circle cx="8" cy="8" r="3.3" fill="#111"/><circle cx="7" cy="7" r="0.9" fill="#fff"/><path d="M3 4L2 2M6 2.8L5.5 1M10 2.8L10.5 1M13 4L14 2" stroke="#111" stroke-width="1"/></g><g transform="translate(273.0,835.0) scale(1.0)"><path d="M7 8V5A3 3 0 0 1 13 5V6" fill="none" stroke="#222" stroke-width="1.4"/><rect x="2.5" y="8" width="9" height="7" rx="1" fill="url(#glock2)" stroke="#222" stroke-width="1"/><rect x="6.2" y="10" width="1.5" height="2.5" fill="#111"/></g><rect x="300.5" y="827" width="85" height="32" rx="5" fill="url(#gbtn)" stroke="#cdc7c2"/><circle cx="314" cy="843.5" r="1.3" fill="#2e3436"/><text x="317" y="848" font-size="11.5" fill="#2e3436" font-weight="bold" text-anchor="start" textLength="38" lengthAdjust="spacingAndGlyphs" >Wappen</text><path d="M362.5 840.5H372.5L367.5 846Z" fill="#2e3436"/><text x="387" y="847" font-size="12.5" fill="#2e3436" font-weight="bold" text-anchor="start" textLength="50" lengthAdjust="spacingAndGlyphs" >Gruppe</text><text x="437" y="847" font-size="12.5" fill="#2e3436" font-weight="normal" text-anchor="start" textLength="29" lengthAdjust="spacingAndGlyphs" > aus </text><text x="467" y="847" font-size="12.5" fill="#2e3436" font-weight="bold" text-anchor="start" textLength="9" lengthAdjust="spacingAndGlyphs" >3</text><text x="476" y="847" font-size="12.5" fill="#2e3436" font-weight="normal" text-anchor="start" textLength="124" lengthAdjust="spacingAndGlyphs" > Objekten in Ebene </text><text x="602" y="847" font-size="12.5" fill="#2e3436" font-weight="bold" text-anchor="start" textLength="56" lengthAdjust="spacingAndGlyphs" >Wappen</text><text x="658" y="847" font-size="12.5" fill="#2e3436" font-weight="normal" text-anchor="start" textLength="504" lengthAdjust="spacingAndGlyphs" >. Klicken Sie auf die Auswahl, um zwischen Skalieren und Rotieren umzuschalten.</text><rect x="1243" y="826" width="1" height="34" fill="#dad6d2" /><text x="1253" y="837.8" font-size="11.5" fill="#2e3436" font-weight="normal" text-anchor="start" textLength="10" lengthAdjust="spacingAndGlyphs" >X:</text><text x="1273.5" y="837.8" font-size="11.5" fill="#2e3436" font-weight="normal" text-anchor="start" textLength="48" lengthAdjust="spacingAndGlyphs" >-644,70</text><text x="1253" y="854.6" font-size="11.5" fill="#2e3436" font-weight="normal" text-anchor="start" textLength="10" lengthAdjust="spacingAndGlyphs" >Y:</text><text x="1278.5" y="854.6" font-size="11.5" fill="#2e3436" font-weight="normal" text-anchor="start" textLength="43" lengthAdjust="spacingAndGlyphs" >195,30</text><text x="1331" y="847.5" font-size="11.5" fill="#2e3436" font-weight="normal" text-anchor="start" textLength="11" lengthAdjust="spacingAndGlyphs" >Z:</text><rect x="1353.0" y="827.5" width="98.0" height="31" rx="5" fill="#fff" stroke="#cdc7c2"/><rect x="1407" y="828" width="1" height="30" fill="#ebe9e6" /><rect x="1428" y="828" width="1" height="30" fill="#ebe9e6" /><rect x="1412.5" y="842.2" width="10" height="1.8" fill="#2e3436" /><rect x="1434.75" y="842.2" width="10" height="1.8" fill="#2e3436" /><rect x="1438.85" y="838.0" width="1.8" height="10" fill="#2e3436" /><text x="1365" y="847.6" font-size="12.5" fill="#000" font-weight="normal" text-anchor="start" textLength="26" lengthAdjust="spacingAndGlyphs" >48%</text><text x="1462" y="847.5" font-size="11.5" fill="#2e3436" font-weight="normal" text-anchor="start" textLength="11" lengthAdjust="spacingAndGlyphs" >R:</text><rect x="1483.0" y="827.5" width="106.0" height="31" rx="5" fill="#fff" stroke="#cdc7c2"/><rect x="1545.5" y="828" width="1" height="30" fill="#ebe9e6" /><rect x="1566.5" y="828" width="1" height="30" fill="#ebe9e6" /><rect x="1551.0" y="842.2" width="10" height="1.8" fill="#2e3436" /><rect x="1573.0" y="842.2" width="10" height="1.8" fill="#2e3436" /><rect x="1577.1" y="838.0" width="1.8" height="10" fill="#2e3436" /><text x="1499" y="847.6" font-size="12.5" fill="#000" font-weight="normal" text-anchor="start" textLength="34" lengthAdjust="spacingAndGlyphs" >0,00°</text><rect x="0" y="860" width="1600" height="40" fill="url(#gtask)"/><rect x="394" y="860" width="160" height="40" fill="#ebeae9" /><rect x="394" y="898" width="160" height="2" fill="#0078d7" /><rect x="558" y="898" width="152" height="2" fill="#0078d7" /><rect x="719" y="898" width="152" height="2" fill="#0078d7" /><path d="M16 873.5L23.5 872.5V879.5H16ZM24.5 872.3L32 871.2V879.5H24.5ZM16 880.5H23.5V887.5L16 886.5ZM24.5 880.5H32V888.8L24.5 887.7Z" fill="#000"/><circle cx="75" cy="880" r="11.5" fill="#2a6fd6"/><path d="M66 876C70 872 80 872 84 878C82 884 76 888 70 886C68 882 66 880 66 876Z" fill="#fff"/><path d="M66 876L75 881L84 877" fill="none" stroke="#9ab" stroke-width="0.8"/><path d="M113 872H120L121.5 874H134V889H113Z" fill="#f6c443"/><path d="M113 876H134V889H113Z" fill="#fcd55c"/><path d="M117 889V881H130V889H126.5V884.5H120.5V889Z" fill="#2b86d8"/><circle cx="173" cy="880" r="11" fill="#1296e2"/><text x="173" y="885.5" font-size="15" font-weight="bold" fill="#fff" text-anchor="middle">S</text><circle cx="222" cy="880" r="11" fill="#db4437"/><path d="M222 880L211 880A11 11 0 0 0 216.5 889.5Z" fill="#0f9d58"/><path d="M222 880L216.5 889.5A11 11 0 0 0 233 880Z" fill="#f4b400"/><path d="M212 875A11 11 0 0 0 211 880L222 880Z" fill="#0f9d58"/><circle cx="222" cy="880" r="5" fill="#fff"/><circle cx="222" cy="880" r="3.8" fill="#4285f4"/><ellipse cx="271" cy="877" rx="10" ry="6" transform="rotate(-20 271 877)" fill="#eee" stroke="#e03030" stroke-width="1.2"/><path d="M266 873L274 885M278 871L273 885" stroke="#777" stroke-width="1"/><circle cx="274" cy="887" r="2.5" fill="none" stroke="#2a8ad8" stroke-width="1.3"/><circle cx="280" cy="884" r="2.5" fill="none" stroke="#2a8ad8" stroke-width="1.3"/><path d="M314 889L321 870H327L333 889H329L324 875L318 889Z" fill="#dedede" stroke="#aaa" stroke-width="0.6"/><path d="M309 874C310 877 311 879 313 883L315 889L317 883C319 879 320 877 321 874L318 877L317 873L315 876L313 872L312 877Z" fill="#d04020"/><circle cx="369" cy="880" r="11" fill="#1e3a78"/><path d="M364.5 881H373.5V888H364.5Z" fill="#fff"/><path d="M366 881V877A3 3 0 0 1 372 877V881" fill="none" stroke="#fff" stroke-width="2"/><rect x="368.3" y="883" width="1.4" height="3" fill="#1e3a78"/><g transform="translate(404,868) scale(1.2)"><path d="M10 0.5L19.5 10L17 12.3H3L0.5 10Z" fill="url(#gink)" stroke="#111" stroke-width="0.6"/><path d="M10 0.7L14.2 4.9L12.6 5.6L11.3 4.4L10.2 6.4L8.6 4.8L6.8 5.8L5.6 5.1Z" fill="#f2f2f2"/><path d="M4 13.2H14.5L12.5 15.3L11 18.8L9.2 17.2L7.5 15.2H4.5Z" fill="#151520"/><ellipse cx="3.8" cy="16.3" rx="1.3" ry="0.8" fill="#111"/><ellipse cx="16.3" cy="15.3" rx="1.4" ry="0.8" fill="#111"/></g><g transform="translate(564,868) scale(1.2)"><path d="M10 0.5L19.5 10L17 12.3H3L0.5 10Z" fill="url(#gink)" stroke="#111" stroke-width="0.6"/><path d="M10 0.7L14.2 4.9L12.6 5.6L11.3 4.4L10.2 6.4L8.6 4.8L6.8 5.8L5.6 5.1Z" fill="#f2f2f2"/><path d="M4 13.2H14.5L12.5 15.3L11 18.8L9.2 17.2L7.5 15.2H4.5Z" fill="#151520"/><ellipse cx="3.8" cy="16.3" rx="1.3" ry="0.8" fill="#111"/><ellipse cx="16.3" cy="15.3" rx="1.4" ry="0.8" fill="#111"/></g><text x="432" y="886" font-size="12.5" fill="#000" font-weight="normal" text-anchor="start" textLength="111" lengthAdjust="spacingAndGlyphs" >*WappenHaut1.svg...</text><text x="592" y="886" font-size="12.5" fill="#000" font-weight="normal" text-anchor="start" textLength="109" lengthAdjust="spacingAndGlyphs" >*Neues Dokument ...</text><path d="M728.5 868.5H742L746.5 873V891.5H728.5Z" fill="#fff" stroke="#2a7ad4" stroke-width="1.2"/><path d="M742 868.5V873H746.5Z" fill="#2a7ad4"/><path d="M731 877H737M731 880H744M731 883H744M731 886H740" stroke="#2a7ad4" stroke-width="1"/><rect x="738" y="875" width="6" height="4" fill="none" stroke="#2a7ad4" stroke-width="0.8"/><text x="753" y="886" font-size="12.5" fill="#000" font-weight="normal" text-anchor="start" textLength="105" lengthAdjust="spacingAndGlyphs" >Hirschkopf 1.odt - ...</text><path d="M1392 884L1397 879L1402 884" fill="none" stroke="#000" stroke-width="1.1"/><g fill="none" stroke="#000" stroke-width="1.1"><path d="M1415 880A12 12 0 0 1 1427 876"/><path d="M1417.5 883A8 8 0 0 1 1426 879.5"/><path d="M1420 885.5A4 4 0 0 1 1425 883"/></g><circle cx="1426" cy="886" r="1.5" fill="#000"/><rect x="1440.5" y="876.5" width="13" height="8" fill="#000" stroke="#000"/><rect x="1442" y="878" width="10" height="5" fill="#d5d4d6"/><rect x="1442" y="878" width="7" height="5" fill="#000"/><rect x="1453.5" y="879" width="1.5" height="3" fill="#000"/><path d="M1438 874L1441 877M1436.5 876.5L1439 879" stroke="#000" stroke-width="1"/><path d="M1461 877H1464L1468 873V889L1464 885H1461Z" fill="none" stroke="#000" stroke-width="1.1"/><path d="M1470 878L1474 882M1474 878L1470 882" stroke="#000" stroke-width="1"/><text x="1514" y="875" font-size="12" fill="#000" font-weight="normal" text-anchor="middle" textLength="29" lengthAdjust="spacingAndGlyphs" >11:40</text><text x="1514.5" y="891.5" font-size="12" fill="#000" font-weight="normal" text-anchor="middle" textLength="54" lengthAdjust="spacingAndGlyphs" >23.02.2021</text><path d="M1559.5 872.5H1575.5V884.5H1566L1562 888V884.5H1559.5Z" fill="#000"/><path d="M1562 876H1573M1562 879H1573M1562 882H1569" stroke="#d5d4d6" stroke-width="1"/><circle cx="1572" cy="886" r="3" fill="#d5d4d6" stroke="#000" stroke-width="1"/><rect x="1598" y="860" width="2" height="40" fill="#c8c8ca" /></svg></body></html>
